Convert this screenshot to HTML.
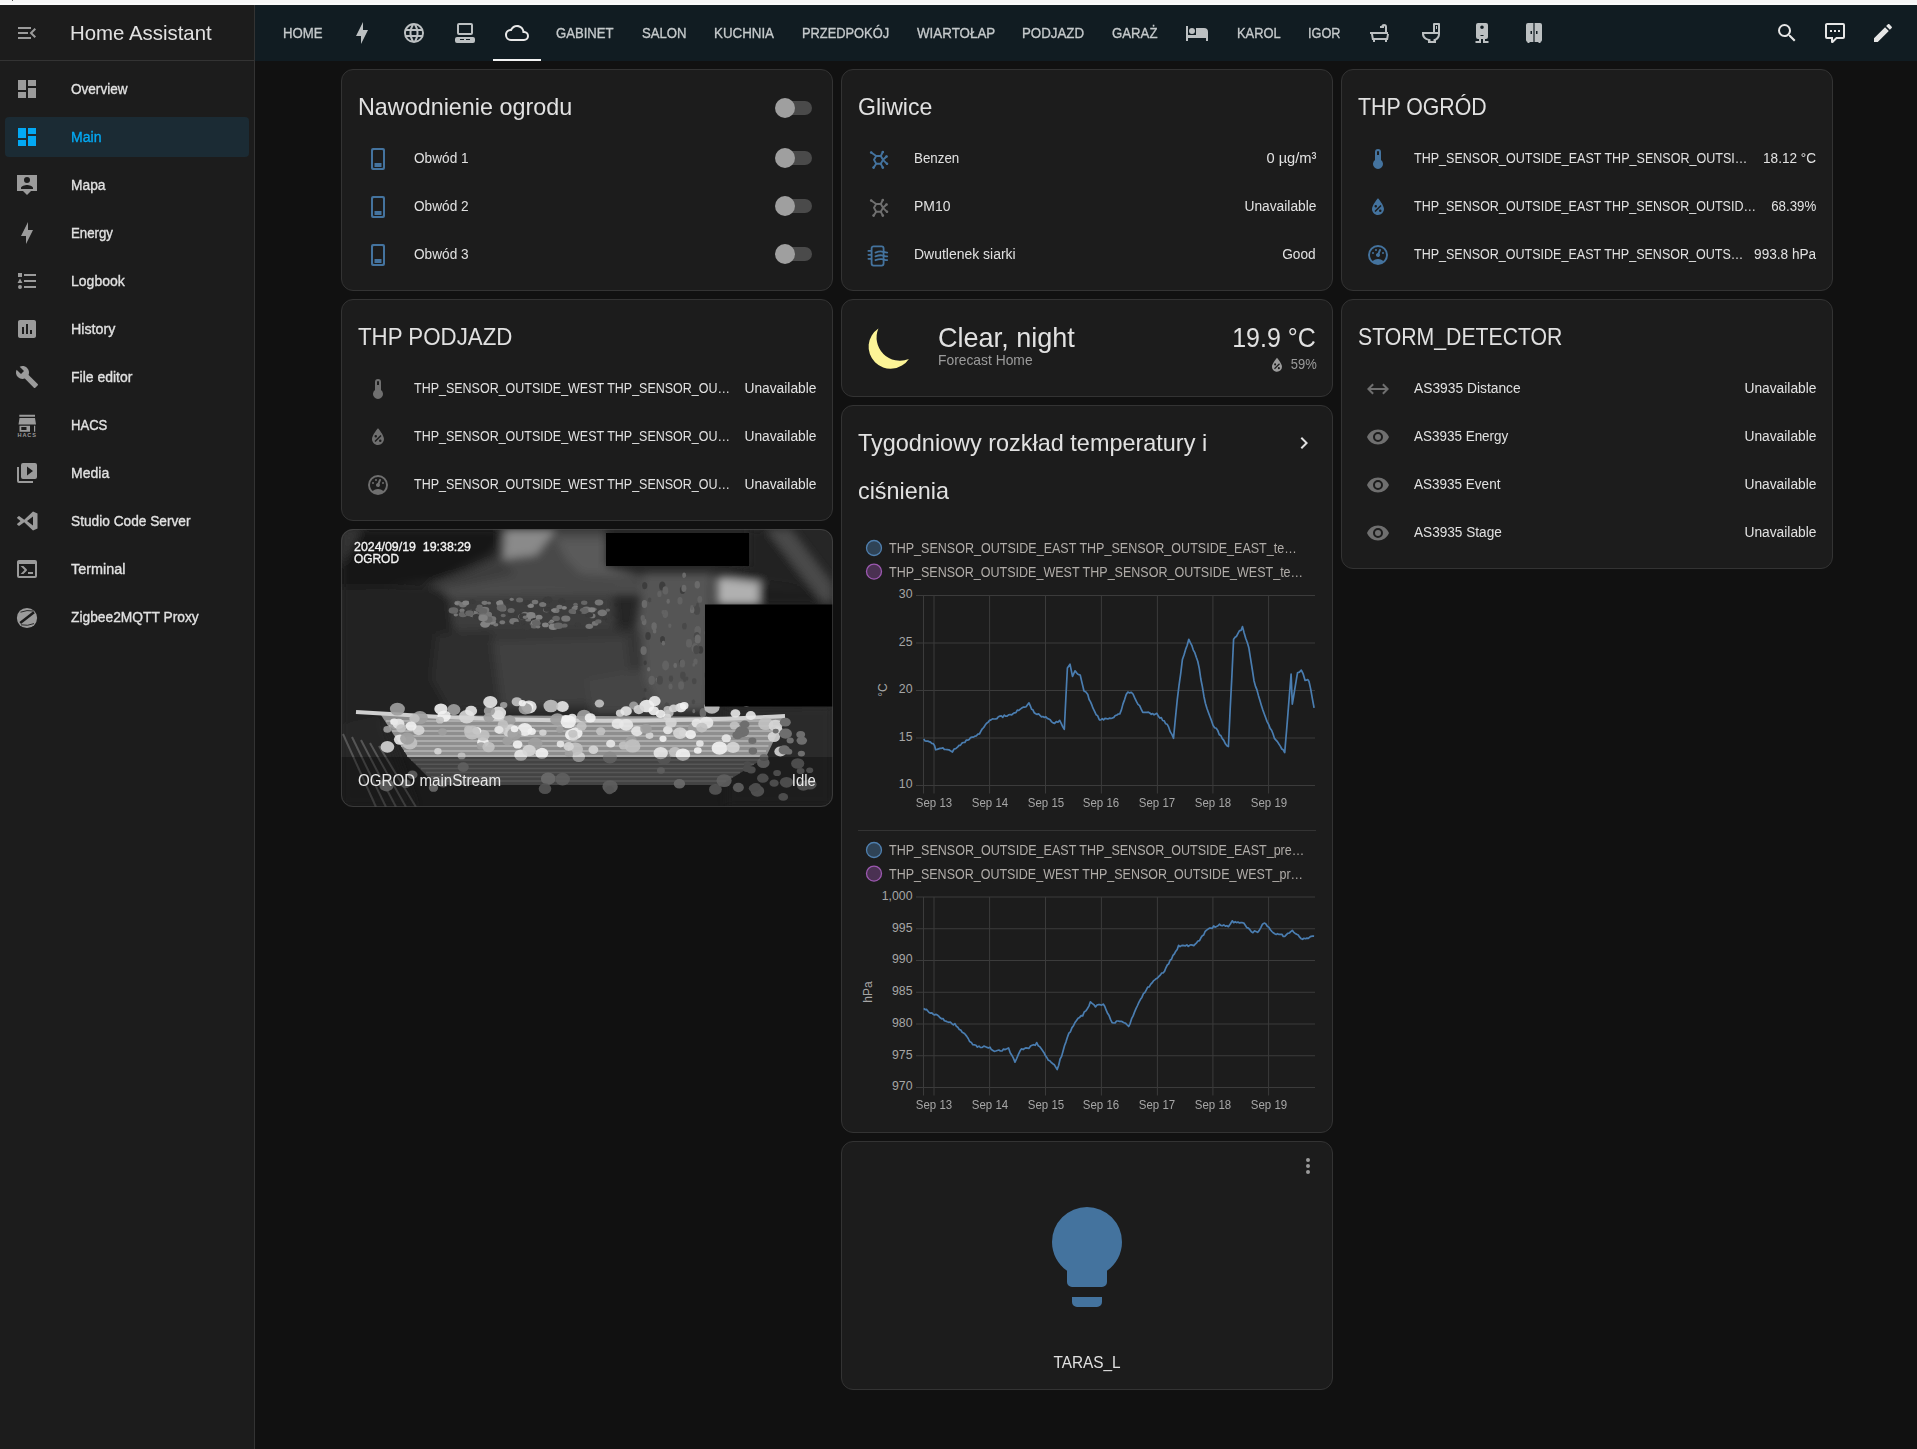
<!DOCTYPE html>
<html><head><meta charset="utf-8">
<style>
*{box-sizing:border-box;margin:0;padding:0}
html,body{width:1917px;height:1449px;overflow:hidden;background:#111111;font-family:"Liberation Sans",sans-serif;color:#e1e1e1}
.abs{position:absolute}
.t{position:absolute;white-space:nowrap;line-height:1}
.card{position:absolute;background:#1c1c1c;border:1px solid #333333;border-radius:12px;overflow:hidden}
.tog{position:absolute;width:36px;height:20px}
.tog .tr{position:absolute;left:3px;top:3px;width:34px;height:14px;border-radius:7px;background:#4a4a4a}
.tog .th{position:absolute;left:0;top:0;width:20px;height:20px;border-radius:10px;background:#9f9f9f}
.ell{overflow:hidden;text-overflow:ellipsis}
</style></head><body>
<div class="abs" style="left:0;top:0;width:1917px;height:5px;background:#f6f6f6"></div>
<div class="abs" style="left:0;top:3px;width:1917px;height:2px;background:#fafafa"></div>
<div class="abs" style="left:12px;top:0;width:1px;height:1px;background:#555"></div>

<div class="abs" style="left:0;top:5px;width:255px;height:1444px;background:#1c1c1c;border-right:1px solid #333333"></div>
<div class="abs" style="left:0;top:60px;width:254px;height:1px;background:#333333"></div>
<svg class="abs" style="left:15px;top:21px;width:24px;height:24px;fill:#9b9b9b" viewBox="0 0 24 24"><path d="M21,15.61L19.59,17L14.58,12L19.59,7L21,8.39L17.44,12L21,15.61M3,6H16V8H3V6M3,13V11H13V13H3M3,18V16H16V18H3Z"/></svg>
<div class="t" style="top:22.22px;font-size:21px;color:#e1e1e1;transform:scaleX(0.9712);transform-origin:0 0;left:70px;">Home Assistant</div>
<svg class="abs" style="left:15px;top:77px;width:24px;height:24px;fill:#9b9b9b" viewBox="0 0 24 24"><path d="M13,3V9H21V3M13,21H21V11H13M3,21H11V15H3M3,13H11V3H3V13Z"/></svg>
<div class="t" style="top:81.13px;font-size:15.2px;color:#e1e1e1;-webkit-text-stroke:0.35px currentColor;transform:scaleX(0.8926);transform-origin:0 0;left:71px;">Overview</div>
<div class="abs" style="left:5px;top:117px;width:244px;height:40px;border-radius:4px;background:#1b2b34"></div>
<svg class="abs" style="left:15px;top:125px;width:24px;height:24px;fill:#03a9f4" viewBox="0 0 24 24"><path d="M13,3V9H21V3M13,21H21V11H13M3,21H11V15H3M3,13H11V3H3V13Z"/></svg>
<div class="t" style="top:129.13px;font-size:15.2px;color:#03a9f4;-webkit-text-stroke:0.35px currentColor;transform:scaleX(0.9264);transform-origin:0 0;left:71px;">Main</div>
<svg class="abs" style="left:15px;top:173px;width:24px;height:24px;fill:#9b9b9b" viewBox="0 0 24 24"><path d="M2,2H22V18H16L12,22L8,18H2V2M12,4A3,3 0 0,0 9,7A3,3 0 0,0 12,10A3,3 0 0,0 15,7A3,3 0 0,0 12,4M6,16H18V15C18,13 14,12 12,12C10,12 6,13 6,15V16Z"/></svg>
<div class="t" style="top:177.13px;font-size:15.2px;color:#e1e1e1;-webkit-text-stroke:0.35px currentColor;transform:scaleX(0.9079);transform-origin:0 0;left:71px;">Mapa</div>
<svg class="abs" style="left:15px;top:221px;width:24px;height:24px;fill:#9b9b9b" viewBox="0 0 24 24"><path d="M11 15H6L13 1V9H18L11 23V15Z"/></svg>
<div class="t" style="top:225.13px;font-size:15.2px;color:#e1e1e1;-webkit-text-stroke:0.35px currentColor;transform:scaleX(0.8727);transform-origin:0 0;left:71px;">Energy</div>
<svg class="abs" style="left:15px;top:269px;width:24px;height:24px;fill:#9b9b9b" viewBox="0 0 24 24"><path d="M5,9.5L7.5,14H2.5L5,9.5M3,4H7V8H3V4M5,20A2,2 0 0,0 7,18A2,2 0 0,0 5,16A2,2 0 0,0 3,18A2,2 0 0,0 5,20M9,5V7H21V5H9M9,19H21V17H9V19M9,13H21V11H9V13Z"/></svg>
<div class="t" style="top:273.13px;font-size:15.2px;color:#e1e1e1;-webkit-text-stroke:0.35px currentColor;transform:scaleX(0.9231);transform-origin:0 0;left:71px;">Logbook</div>
<svg class="abs" style="left:15px;top:317px;width:24px;height:24px;fill:#9b9b9b" viewBox="0 0 24 24"><path d="M9 17H7V10H9V17M13 17H11V7H13V17M17 17H15V13H17V17M19 3H5C3.9 3 3 3.9 3 5V19C3 20.1 3.9 21 5 21H19C20.1 21 21 20.1 21 19V5C21 3.9 20.1 3 19 3Z"/></svg>
<div class="t" style="top:321.13px;font-size:15.2px;color:#e1e1e1;-webkit-text-stroke:0.35px currentColor;transform:scaleX(0.9373);transform-origin:0 0;left:71px;">History</div>
<svg class="abs" style="left:15px;top:365px;width:24px;height:24px;fill:#9b9b9b" viewBox="0 0 24 24"><path d="M22.7,19L13.6,9.9C14.5,7.6 14,4.9 12.1,3C10.1,1 7.1,0.6 4.7,1.7L9,6L6,9L1.6,4.7C0.4,7.1 0.9,10.1 2.9,12.1C4.8,14 7.5,14.5 9.8,13.6L18.9,22.7C19.3,23.1 19.9,23.1 20.3,22.7L22.6,20.4C23.1,20 23.1,19.3 22.7,19Z"/></svg>
<div class="t" style="top:369.13px;font-size:15.2px;color:#e1e1e1;-webkit-text-stroke:0.35px currentColor;transform:scaleX(0.9207);transform-origin:0 0;left:71px;">File editor</div>
<svg class="abs" style="left:15px;top:413px;width:24px;height:24px;overflow:visible" viewBox="0 0 24 24"><path fill="#9b9b9b" fill-rule="evenodd" d="M4.3,1.8H20V3.8H4.3Z M4.5,4.9H20L21,11.5H3.5Z M4.5,12.8H15V18.7H4.5Z M6.3,14.1H11.5V17.1H6.3Z M19,12.8H20.2V18.7H19Z"/><text x="12.2" y="24.3" font-size="5.6" font-weight="700" text-anchor="middle" letter-spacing="0.9" fill="#9b9b9b" font-family="Liberation Sans">HACS</text></svg>
<div class="t" style="top:417.13px;font-size:15.2px;color:#e1e1e1;-webkit-text-stroke:0.35px currentColor;transform:scaleX(0.8601);transform-origin:0 0;left:71px;">HACS</div>
<svg class="abs" style="left:15px;top:461px;width:24px;height:24px;fill:#9b9b9b" viewBox="0 0 24 24"><path d="M4,6H2V20A2,2 0 0,0 4,22H18V20H4V6M22,4V16A2,2 0 0,1 20,18H8A2,2 0 0,1 6,16V4A2,2 0 0,1 8,2H20A2,2 0 0,1 22,4M12,14.5L18,10L12,5.5V14.5Z"/></svg>
<div class="t" style="top:465.13px;font-size:15.2px;color:#e1e1e1;-webkit-text-stroke:0.35px currentColor;transform:scaleX(0.9233);transform-origin:0 0;left:71px;">Media</div>
<svg class="abs" style="left:16px;top:509px;width:24px;height:24px;overflow:visible" viewBox="0 0 24 24"><path fill="#9b9b9b" fill-rule="evenodd" d="M17,16.47V7.39L11,11.93Z M1.22,9.19C1.22,9.19 0.75,8.84 1.31,8.37L2.62,7.2C2.62,7.2 3,6.8 3.4,7.15L8.22,10.79L17,2.55L21.5,4.5V19.5L17,21.45L8.22,13.2L3.4,16.85C3,17.2 2.62,16.8 2.62,16.8L1.31,15.63C0.75,15.16 1.22,14.81 1.22,14.81L4.5,12L1.22,9.19Z"/></svg>
<div class="t" style="top:513.13px;font-size:15.2px;color:#e1e1e1;-webkit-text-stroke:0.35px currentColor;transform:scaleX(0.9016);transform-origin:0 0;left:71px;">Studio Code Server</div>
<svg class="abs" style="left:15px;top:557px;width:24px;height:24px;fill:#9b9b9b" viewBox="0 0 24 24"><path d="M20,19V7H4V19H20M20,3A2,2 0 0,1 22,5V19A2,2 0 0,1 20,21H4A2,2 0 0,1 2,19V5C2,3.89 2.9,3 4,3H20M13,17V15H18V17H13M9.58,13L5.57,9H8.4L11.7,12.3C12.09,12.69 12.09,13.33 11.7,13.72L8.42,17H5.59L9.58,13Z"/></svg>
<div class="t" style="top:561.13px;font-size:15.2px;color:#e1e1e1;-webkit-text-stroke:0.35px currentColor;transform:scaleX(0.9479);transform-origin:0 0;left:71px;">Terminal</div>
<svg class="abs" style="left:15px;top:605px;width:24px;height:24px;overflow:visible" viewBox="0 0 24 24"><circle cx="12" cy="13" r="10.1" fill="#9b9b9b"/><g stroke="#1c1c1c" fill="none" stroke-linecap="butt"><path d="M5.2,18 L19,7.2" stroke-width="2.6"/><path d="M5.5,7.2 Q12,4.6 18.5,6" stroke-width="0.9"/><path d="M6,19.8 Q12.5,21.3 19,18.6" stroke-width="0.9"/></g></svg>
<div class="t" style="top:609.13px;font-size:15.2px;color:#e1e1e1;-webkit-text-stroke:0.35px currentColor;transform:scaleX(0.9078);transform-origin:0 0;left:71px;">Zigbee2MQTT Proxy</div>
<div class="abs" style="left:255px;top:5px;width:1662px;height:56px;background:#111c22"></div>
<div class="t" style="top:25.08px;font-size:15.5px;color:#c5c9cb;-webkit-text-stroke:0.35px currentColor;transform:scaleX(0.8516);transform-origin:0 0;left:283px;">HOME</div>
<svg class="abs" style="left:350px;top:21px;width:24px;height:24px;fill:#bcc0c2" viewBox="0 0 24 24"><path d="M11 15H6L13 1V9H18L11 23V15Z"/></svg>
<svg class="abs" style="left:402px;top:21px;width:24px;height:24px;fill:#bcc0c2" viewBox="0 0 24 24"><path d="M16.36,14C16.44,13.34 16.5,12.68 16.5,12C16.5,11.32 16.44,10.66 16.36,10H19.74C19.9,10.64 20,11.31 20,12C20,12.69 19.9,13.36 19.74,14M14.59,19.56C15.19,18.45 15.65,17.25 15.97,16H18.92C17.96,17.65 16.43,18.93 14.59,19.56M14.34,14H9.66C9.56,13.34 9.5,12.68 9.5,12C9.5,11.32 9.56,10.65 9.66,10H14.34C14.43,10.65 14.5,11.32 14.5,12C14.5,12.68 14.43,13.34 14.34,14M12,19.96C11.17,18.76 10.5,17.43 10.09,16H13.91C13.5,17.43 12.83,18.76 12,19.96M8,8H5.08C6.03,6.34 7.57,5.06 9.4,4.44C8.8,5.55 8.35,6.75 8,8M5.08,16H8C8.35,17.25 8.8,18.45 9.4,19.56C7.57,18.93 6.03,17.65 5.08,16M4.26,14C4.1,13.36 4,12.69 4,12C4,11.31 4.1,10.64 4.26,10H7.64C7.56,10.66 7.5,11.32 7.5,12C7.5,12.68 7.56,13.34 7.64,14M12,4.03C12.83,5.23 13.5,6.57 13.91,8H10.09C10.5,6.57 11.17,5.23 12,4.03M18.92,8H15.97C15.65,6.75 15.19,5.55 14.59,4.44C16.43,5.07 17.96,6.34 18.92,8M12,2C6.47,2 2,6.5 2,12A10,10 0 0,0 12,22A10,10 0 0,0 22,12A10,10 0 0,0 12,2Z"/></svg>
<svg class="abs" style="left:453px;top:21px;width:24px;height:24px;fill:#bcc0c2" viewBox="0 0 24 24"><path d="M6,2H18A2,2 0 0,1 20,4V12A2,2 0 0,1 18,14H6A2,2 0 0,1 4,12V4A2,2 0 0,1 6,2M6,4V12H18V4H6M4,16H20A2,2 0 0,1 22,18V20A2,2 0 0,1 20,22H4A2,2 0 0,1 2,20V18A2,2 0 0,1 4,16M7,18V19H11V18H7M13,18V19H17V18H13Z"/></svg>
<svg class="abs" style="left:505px;top:21px;width:24px;height:24px;fill:#e8e8e8" viewBox="0 0 24 24"><path d="M19,18H6A4,4 0 0,1 2,14A4,4 0 0,1 6,10H6.71C7.37,7.69 9.5,6 12,6A5.5,5.5 0 0,1 17.5,11.5V12H19A3,3 0 0,1 22,15A3,3 0 0,1 19,18M19.35,10.03C18.67,6.59 15.64,4 12,4C9.11,4 6.6,5.64 5.35,8.03C2.34,8.36 0,10.9 0,14A6,6 0 0,0 6,20H19A5,5 0 0,0 24,15C24,12.36 21.95,10.22 19.35,10.03Z"/></svg>
<div class="t" style="top:25.08px;font-size:15.5px;color:#c5c9cb;-webkit-text-stroke:0.35px currentColor;transform:scaleX(0.8465);transform-origin:0 0;left:556px;">GABINET</div>
<div class="t" style="top:25.08px;font-size:15.5px;color:#c5c9cb;-webkit-text-stroke:0.35px currentColor;transform:scaleX(0.8485);transform-origin:0 0;left:642px;">SALON</div>
<div class="t" style="top:25.08px;font-size:15.5px;color:#c5c9cb;-webkit-text-stroke:0.35px currentColor;transform:scaleX(0.8600);transform-origin:0 0;left:714px;">KUCHNIA</div>
<div class="t" style="top:25.08px;font-size:15.5px;color:#c5c9cb;-webkit-text-stroke:0.35px currentColor;transform:scaleX(0.8289);transform-origin:0 0;left:802px;">PRZEDPOKÓJ</div>
<div class="t" style="top:25.08px;font-size:15.5px;color:#c5c9cb;-webkit-text-stroke:0.35px currentColor;transform:scaleX(0.8619);transform-origin:0 0;left:917px;">WIARTOŁAP</div>
<div class="t" style="top:25.08px;font-size:15.5px;color:#c5c9cb;-webkit-text-stroke:0.35px currentColor;transform:scaleX(0.8584);transform-origin:0 0;left:1022px;">PODJAZD</div>
<div class="t" style="top:25.08px;font-size:15.5px;color:#c5c9cb;-webkit-text-stroke:0.35px currentColor;transform:scaleX(0.8520);transform-origin:0 0;left:1112px;">GARAŻ</div>
<svg class="abs" style="left:1185px;top:21px;width:24px;height:24px;fill:#bcc0c2" viewBox="0 0 24 24"><path d="M19,7H11V14H3V5H1V20H3V17H21V20H23V11A4,4 0 0,0 19,7M7,13A3,3 0 0,0 10,10A3,3 0 0,0 7,7A3,3 0 0,0 4,10A3,3 0 0,0 7,13Z"/></svg>
<div class="t" style="top:25.08px;font-size:15.5px;color:#c5c9cb;-webkit-text-stroke:0.35px currentColor;transform:scaleX(0.8333);transform-origin:0 0;left:1237px;">KAROL</div>
<div class="t" style="top:25.08px;font-size:15.5px;color:#c5c9cb;-webkit-text-stroke:0.35px currentColor;transform:scaleX(0.8202);transform-origin:0 0;left:1308px;">IGOR</div>
<svg class="abs" style="left:1368px;top:21px;width:24px;height:24px;fill:#bcc0c2" viewBox="0 0 24 24"><path d="M20 13V11H19V6A3 3 0 0 0 16 3A3 3 0 0 0 13.2 5H12V7H16V5.5C16.5 5.2 17 5 17 6V11H2V13H3L4 19H5V21H7V19H17V21H19V19H20L21 13M18.3 17H5.7L5 13H19Z"/></svg>
<svg class="abs" style="left:1419px;top:21px;width:24px;height:24px;fill:#bcc0c2" viewBox="0 0 24 24"><path d="M9,22H17V19.5C19.41,18.41 21,16 21,13V3A1,1 0 0,0 20,2H15C14,2 14,3 14,3V11H3C3,11 3,13 3,13C3,16 4.89,18.5 9,19.5V22M5.08,13H19C19,15.7 16.7,17.9 14.5,18.2V20H11.5V18.2C8,17.8 5.5,16.3 5.08,13M16,4H19V11H16V4M17,5V8H18V5H17Z"/></svg>
<svg class="abs" style="left:1470px;top:21px;width:24px;height:24px;fill:#bcc0c2" viewBox="0 0 24 24"><path d="M8,2H16A2,2 0 0,1 18,4V16A2,2 0 0,1 16,18H15V20H18.5V22H13V18H11V22H5.5V20H9V18H8A2,2 0 0,1 6,16V4A2,2 0 0,1 8,2M12,4.5A1.8,1.8 0 0,0 10.2,6.3A1.8,1.8 0 0,0 12,8.1A1.8,1.8 0 0,0 13.8,6.3A1.8,1.8 0 0,0 12,4.5M10.5,14V15H13.5V14H10.5Z"/></svg>
<svg class="abs" style="left:1522px;top:21px;width:24px;height:24px;fill:#bcc0c2" viewBox="0 0 24 24"><path d="M6,2H11.4V21H7.5V22H5.5V21A2,2 0 0,1 4,19V4A2,2 0 0,1 6,2M12.6,2H18A2,2 0 0,1 20,4V19A2,2 0 0,1 18.5,21V22H16.5V21H12.6V2M8.5,10V13H10V10H8.5M14,10V13H15.5V10H14Z"/></svg>
<div class="abs" style="left:493px;top:59px;width:48px;height:2px;background:#f2f2f2"></div>
<svg class="abs" style="left:1775px;top:21px;width:24px;height:24px;fill:#e6e6e6" viewBox="0 0 24 24"><path d="M9.5,3A6.5,6.5 0 0,1 16,9.5C16,11.11 15.41,12.59 14.44,13.73L14.71,14H15.5L20.5,19L19,20.5L14,15.5V14.71L13.73,14.44C12.59,15.41 11.11,16 9.5,16A6.5,6.5 0 0,1 3,9.5A6.5,6.5 0 0,1 9.5,3M9.5,5C7,5 5,7 5,9.5C5,12 7,14 9.5,14C12,14 14,12 14,9.5C14,7 12,5 9.5,5Z"/></svg>
<svg class="abs" style="left:1823px;top:21px;width:24px;height:24px;fill:#e6e6e6" viewBox="0 0 24 24"><path d="M9,22A1,1 0 0,1 8,21V18H4A2,2 0 0,1 2,16V4C2,2.89 2.9,2 4,2H20A2,2 0 0,1 22,4V16A2,2 0 0,1 20,18H13.9L10.2,21.71C10,21.9 9.75,22 9.5,22V22H9M10,16V19.08L13.08,16H20V4H4V16H10M17,11H15V9H17V11M13,11H11V9H13V11M9,11H7V9H9V11Z"/></svg>
<svg class="abs" style="left:1871px;top:21px;width:24px;height:24px;fill:#e6e6e6" viewBox="0 0 24 24"><path d="M20.71,7.04C21.1,6.65 21.1,6 20.71,5.63L18.37,3.29C18,2.9 17.35,2.9 16.96,3.29L15.12,5.12L18.87,8.87M3,17.25V21H6.75L17.81,9.93L14.06,6.18L3,17.25Z"/></svg>
<div class="card" style="left:341px;top:69px;width:492px;height:222px;"></div>
<div class="t" style="top:94.98px;font-size:24px;color:#e1e1e1;transform:scaleX(0.9729);transform-origin:0 0;left:358px;">Nawodnienie ogrodu</div>
<div class="tog" style="left:775px;top:98px"><div class="tr"></div><div class="th"></div></div>
<svg class="abs" style="left:366px;top:147px;width:24px;height:24px;fill:#44739e" viewBox="0 0 24 24"><path d="M7,1H17A2,2 0 0,1 19,3V21A2,2 0 0,1 17,23H7A2,2 0 0,1 5,21V3A2,2 0 0,1 7,1M8,3A1,1 0 0,0 7,4V20A1,1 0 0,0 8,21H16A1,1 0 0,0 17,20V4A1,1 0 0,0 16,3H8M8.5,16H15.5V20H8.5V16Z"/></svg>
<div class="t" style="top:149.96px;font-size:15.4px;color:#e1e1e1;transform:scaleX(0.8862);transform-origin:0 0;left:414px;">Obwód 1</div>
<div class="tog" style="left:775px;top:148px"><div class="tr"></div><div class="th"></div></div>
<svg class="abs" style="left:366px;top:195px;width:24px;height:24px;fill:#44739e" viewBox="0 0 24 24"><path d="M7,1H17A2,2 0 0,1 19,3V21A2,2 0 0,1 17,23H7A2,2 0 0,1 5,21V3A2,2 0 0,1 7,1M8,3A1,1 0 0,0 7,4V20A1,1 0 0,0 8,21H16A1,1 0 0,0 17,20V4A1,1 0 0,0 16,3H8M8.5,16H15.5V20H8.5V16Z"/></svg>
<div class="t" style="top:197.96px;font-size:15.4px;color:#e1e1e1;transform:scaleX(0.8862);transform-origin:0 0;left:414px;">Obwód 2</div>
<div class="tog" style="left:775px;top:196px"><div class="tr"></div><div class="th"></div></div>
<svg class="abs" style="left:366px;top:243px;width:24px;height:24px;fill:#44739e" viewBox="0 0 24 24"><path d="M7,1H17A2,2 0 0,1 19,3V21A2,2 0 0,1 17,23H7A2,2 0 0,1 5,21V3A2,2 0 0,1 7,1M8,3A1,1 0 0,0 7,4V20A1,1 0 0,0 8,21H16A1,1 0 0,0 17,20V4A1,1 0 0,0 16,3H8M8.5,16H15.5V20H8.5V16Z"/></svg>
<div class="t" style="top:245.96px;font-size:15.4px;color:#e1e1e1;transform:scaleX(0.8862);transform-origin:0 0;left:414px;">Obwód 3</div>
<div class="tog" style="left:775px;top:244px"><div class="tr"></div><div class="th"></div></div>
<div class="card" style="left:341px;top:299px;width:492px;height:222px;"></div>
<div class="t" style="top:324.98px;font-size:24px;color:#e1e1e1;transform:scaleX(0.9287);transform-origin:0 0;left:358px;">THP PODJAZD</div>
<svg class="abs" style="left:366px;top:377px;width:24px;height:24px;fill:#6f6f6f" viewBox="0 0 24 24"><path d="M15 13V5A3 3 0 0 0 9 5V13A5 5 0 1 0 15 13M12 4A1 1 0 0 1 13 5V8H11V5A1 1 0 0 1 12 4Z"/></svg>
<div class="t" style="top:379.96px;font-size:15.4px;color:#e1e1e1;transform:scaleX(0.8115);transform-origin:0 0;left:414px;">THP_SENSOR_OUTSIDE_WEST THP_SENSOR_OU…</div>
<div class="t" style="top:379.96px;font-size:15.4px;color:#e1e1e1;transform:scaleX(0.8951);transform-origin:100% 0;right:1101.00px;">Unavailable</div>
<svg class="abs" style="left:366px;top:425px;width:24px;height:24px;fill:#6f6f6f" viewBox="0 0 24 24"><path d="M12,3.25C12,3.25 6,10 6,14C6,17.32 8.69,20 12,20A6,6 0 0,0 18,14C18,10 12,3.25 12,3.25M14.47,9.97L15.53,11.03L9.53,17.03L8.47,15.97M9.75,10A1.25,1.25 0 0,1 11,11.25A1.25,1.25 0 0,1 9.75,12.5A1.25,1.25 0 0,1 8.5,11.25A1.25,1.25 0 0,1 9.75,10M14.25,14.5A1.25,1.25 0 0,1 15.5,15.75A1.25,1.25 0 0,1 14.25,17A1.25,1.25 0 0,1 13,15.75A1.25,1.25 0 0,1 14.25,14.5Z"/></svg>
<div class="t" style="top:427.96px;font-size:15.4px;color:#e1e1e1;transform:scaleX(0.8115);transform-origin:0 0;left:414px;">THP_SENSOR_OUTSIDE_WEST THP_SENSOR_OU…</div>
<div class="t" style="top:427.96px;font-size:15.4px;color:#e1e1e1;transform:scaleX(0.8951);transform-origin:100% 0;right:1101.00px;">Unavailable</div>
<svg class="abs" style="left:366px;top:473px;width:24px;height:24px;fill:#6f6f6f" viewBox="0 0 24 24"><path d="M12,2A10,10 0 0,0 2,12A10,10 0 0,0 12,22A10,10 0 0,0 22,12A10,10 0 0,0 12,2M12,4A8,8 0 0,1 20,12C20,14.4 19,16.5 17.3,18C15.9,16.7 14,16 12,16C10,16 8.2,16.7 6.7,18C5,16.5 4,14.4 4,12A8,8 0 0,1 12,4M14,5.89C13.62,5.9 13.26,6.15 13.1,6.54L11.81,9.77L11.71,10C11,10.13 10.41,10.6 10.14,11.26C9.73,12.29 10.23,13.45 11.26,13.86C12.29,14.27 13.45,13.77 13.86,12.74C14.12,12.08 14,11.32 13.57,10.76L13.67,10.5L14.96,7.29L14.97,7.26C15.17,6.75 14.92,6.17 14.41,5.96C14.28,5.91 14.15,5.89 14,5.89M10,6A1,1 0 0,0 9,7A1,1 0 0,0 10,8A1,1 0 0,0 11,7A1,1 0 0,0 10,6M7,9A1,1 0 0,0 6,10A1,1 0 0,0 7,11A1,1 0 0,0 8,10A1,1 0 0,0 7,9M17,9A1,1 0 0,0 16,10A1,1 0 0,0 17,11A1,1 0 0,0 18,10A1,1 0 0,0 17,9Z"/></svg>
<div class="t" style="top:475.96px;font-size:15.4px;color:#e1e1e1;transform:scaleX(0.8115);transform-origin:0 0;left:414px;">THP_SENSOR_OUTSIDE_WEST THP_SENSOR_OU…</div>
<div class="t" style="top:475.96px;font-size:15.4px;color:#e1e1e1;transform:scaleX(0.8951);transform-origin:100% 0;right:1101.00px;">Unavailable</div>
<div class="card" style="left:841px;top:69px;width:492px;height:222px;"></div>
<div class="t" style="top:94.98px;font-size:24px;color:#e1e1e1;transform:scaleX(0.9606);transform-origin:0 0;left:858px;">Gliwice</div>
<svg class="abs" style="left:866px;top:147px;width:24px;height:24px;overflow:visible" viewBox="0 0 24 24"><g fill="none" stroke="#44739e" stroke-width="1.9" stroke-linecap="round" stroke-linejoin="round"><path d="M10.2,9 H14.8 L17,12.8 L14.8,16.7 H10.2 L8,12.8 Z"/><path d="M10.2,9 L5.2,5.5 M14.8,9 L16.8,5 M17,12.8 L20.5,9.5 M17,12.8 L21,16.8 M10.2,16.7 L7.6,20.6 M14.8,16.7 L16.8,20.6"/></g><g fill="#44739e"><circle cx="5.2" cy="5.5" r="1.3"/><circle cx="16.8" cy="5" r="1.3"/><circle cx="20.5" cy="9.5" r="1.3"/><circle cx="21" cy="16.8" r="1.3"/><circle cx="7.6" cy="20.6" r="1.3"/><circle cx="16.8" cy="20.6" r="1.3"/></g></svg>
<div class="t" style="top:149.96px;font-size:15.4px;color:#e1e1e1;transform:scaleX(0.8678);transform-origin:0 0;left:914px;">Benzen</div>
<div class="t" style="top:149.96px;font-size:15.4px;color:#e1e1e1;transform:scaleX(0.9543);transform-origin:100% 0;right:601.00px;">0 µg/m³</div>
<svg class="abs" style="left:866px;top:195px;width:24px;height:24px;overflow:visible" viewBox="0 0 24 24"><g fill="none" stroke="#6f6f6f" stroke-width="1.9" stroke-linecap="round" stroke-linejoin="round"><path d="M10.2,9 H14.8 L17,12.8 L14.8,16.7 H10.2 L8,12.8 Z"/><path d="M10.2,9 L5.2,5.5 M14.8,9 L16.8,5 M17,12.8 L20.5,9.5 M17,12.8 L21,16.8 M10.2,16.7 L7.6,20.6 M14.8,16.7 L16.8,20.6"/></g><g fill="#6f6f6f"><circle cx="5.2" cy="5.5" r="1.3"/><circle cx="16.8" cy="5" r="1.3"/><circle cx="20.5" cy="9.5" r="1.3"/><circle cx="21" cy="16.8" r="1.3"/><circle cx="7.6" cy="20.6" r="1.3"/><circle cx="16.8" cy="20.6" r="1.3"/></g></svg>
<div class="t" style="top:197.96px;font-size:15.4px;color:#e1e1e1;transform:scaleX(0.9051);transform-origin:0 0;left:914px;">PM10</div>
<div class="t" style="top:197.96px;font-size:15.4px;color:#e1e1e1;transform:scaleX(0.8951);transform-origin:100% 0;right:601.00px;">Unavailable</div>
<svg class="abs" style="left:866px;top:243px;width:24px;height:24px;overflow:visible" viewBox="0 0 24 24"><g fill="none" stroke="#44739e" stroke-width="1.8" stroke-linecap="round"><path d="M7.6,3.4 H15.6 A2,2 0 0,1 17.6,5.4 V20.6 A2,2 0 0,1 15.6,22.6 H7.6 A2,2 0 0,1 5.6,20.6 V5.4 A2,2 0 0,1 7.6,3.4 Z"/><path d="M2.4,7.9 H5 M2.4,11.8 H5 M2.4,15.8 H5"/><path d="M9.5,9.6 C12,8.6 14,8.2 16,8.6 C18,9 19.5,9.4 21.2,9.6 M9.5,13.4 C12,12.4 14,12 16,12.4 C18,12.8 19.5,13.2 21.2,13.4 M9.5,17.2 C12,16.2 14,15.8 16,16.2 C18,16.6 19.5,17 21.2,17.2"/></g></svg>
<div class="t" style="top:245.96px;font-size:15.4px;color:#e1e1e1;transform:scaleX(0.9075);transform-origin:0 0;left:914px;">Dwutlenek siarki</div>
<div class="t" style="top:245.96px;font-size:15.4px;color:#e1e1e1;transform:scaleX(0.8896);transform-origin:100% 0;right:601.00px;">Good</div>
<div class="card" style="left:1341px;top:69px;width:492px;height:222px;"></div>
<div class="t" style="top:94.98px;font-size:24px;color:#e1e1e1;transform:scaleX(0.8875);transform-origin:0 0;left:1358px;">THP OGRÓD</div>
<svg class="abs" style="left:1366px;top:147px;width:24px;height:24px;fill:#44739e" viewBox="0 0 24 24"><path d="M15 13V5A3 3 0 0 0 9 5V13A5 5 0 1 0 15 13M12 4A1 1 0 0 1 13 5V8H11V5A1 1 0 0 1 12 4Z"/></svg>
<div class="t" style="top:149.96px;font-size:15.4px;color:#e1e1e1;transform:scaleX(0.8147);transform-origin:0 0;left:1414px;">THP_SENSOR_OUTSIDE_EAST THP_SENSOR_OUTSI…</div>
<div class="t" style="top:149.96px;font-size:15.4px;color:#e1e1e1;transform:scaleX(0.8824);transform-origin:100% 0;right:101.00px;">18.12 °C</div>
<svg class="abs" style="left:1366px;top:195px;width:24px;height:24px;fill:#44739e" viewBox="0 0 24 24"><path d="M12,3.25C12,3.25 6,10 6,14C6,17.32 8.69,20 12,20A6,6 0 0,0 18,14C18,10 12,3.25 12,3.25M14.47,9.97L15.53,11.03L9.53,17.03L8.47,15.97M9.75,10A1.25,1.25 0 0,1 11,11.25A1.25,1.25 0 0,1 9.75,12.5A1.25,1.25 0 0,1 8.5,11.25A1.25,1.25 0 0,1 9.75,10M14.25,14.5A1.25,1.25 0 0,1 15.5,15.75A1.25,1.25 0 0,1 14.25,17A1.25,1.25 0 0,1 13,15.75A1.25,1.25 0 0,1 14.25,14.5Z"/></svg>
<div class="t" style="top:197.96px;font-size:15.4px;color:#e1e1e1;transform:scaleX(0.8139);transform-origin:0 0;left:1414px;">THP_SENSOR_OUTSIDE_EAST THP_SENSOR_OUTSID…</div>
<div class="t" style="top:197.96px;font-size:15.4px;color:#e1e1e1;transform:scaleX(0.8620);transform-origin:100% 0;right:101.00px;">68.39%</div>
<svg class="abs" style="left:1366px;top:243px;width:24px;height:24px;fill:#44739e" viewBox="0 0 24 24"><path d="M12,2A10,10 0 0,0 2,12A10,10 0 0,0 12,22A10,10 0 0,0 22,12A10,10 0 0,0 12,2M12,4A8,8 0 0,1 20,12C20,14.4 19,16.5 17.3,18C15.9,16.7 14,16 12,16C10,16 8.2,16.7 6.7,18C5,16.5 4,14.4 4,12A8,8 0 0,1 12,4M14,5.89C13.62,5.9 13.26,6.15 13.1,6.54L11.81,9.77L11.71,10C11,10.13 10.41,10.6 10.14,11.26C9.73,12.29 10.23,13.45 11.26,13.86C12.29,14.27 13.45,13.77 13.86,12.74C14.12,12.08 14,11.32 13.57,10.76L13.67,10.5L14.96,7.29L14.97,7.26C15.17,6.75 14.92,6.17 14.41,5.96C14.28,5.91 14.15,5.89 14,5.89M10,6A1,1 0 0,0 9,7A1,1 0 0,0 10,8A1,1 0 0,0 11,7A1,1 0 0,0 10,6M7,9A1,1 0 0,0 6,10A1,1 0 0,0 7,11A1,1 0 0,0 8,10A1,1 0 0,0 7,9M17,9A1,1 0 0,0 16,10A1,1 0 0,0 17,11A1,1 0 0,0 18,10A1,1 0 0,0 17,9Z"/></svg>
<div class="t" style="top:245.96px;font-size:15.4px;color:#e1e1e1;transform:scaleX(0.8134);transform-origin:0 0;left:1414px;">THP_SENSOR_OUTSIDE_EAST THP_SENSOR_OUTS…</div>
<div class="t" style="top:245.96px;font-size:15.4px;color:#e1e1e1;transform:scaleX(0.8848);transform-origin:100% 0;right:101.00px;">993.8 hPa</div>
<div class="card" style="left:1341px;top:299px;width:492px;height:270px;"></div>
<div class="t" style="top:324.98px;font-size:24px;color:#e1e1e1;transform:scaleX(0.8843);transform-origin:0 0;left:1358px;">STORM_DETECTOR</div>
<svg class="abs" style="left:1366px;top:377px;width:24px;height:24px;fill:#6f6f6f" viewBox="0 0 24 24"><path d="M6.45,17.45L1,12L6.45,6.55L7.86,7.96L4.83,11H19.17L16.14,7.96L17.55,6.55L23,12L17.55,17.45L16.14,16.04L19.17,13H4.83L7.86,16.04L6.45,17.45Z"/></svg>
<div class="t" style="top:379.96px;font-size:15.4px;color:#e1e1e1;transform:scaleX(0.8971);transform-origin:0 0;left:1414px;">AS3935 Distance</div>
<div class="t" style="top:379.96px;font-size:15.4px;color:#e1e1e1;transform:scaleX(0.8951);transform-origin:100% 0;right:101.00px;">Unavailable</div>
<svg class="abs" style="left:1366px;top:425px;width:24px;height:24px;fill:#6f6f6f" viewBox="0 0 24 24"><path d="M12,9A3,3 0 0,0 9,12A3,3 0 0,0 12,15A3,3 0 0,0 15,12A3,3 0 0,0 12,9M12,17A5,5 0 0,1 7,12A5,5 0 0,1 12,7A5,5 0 0,1 17,12A5,5 0 0,1 12,17M12,4.5C7,4.5 2.73,7.61 1,12C2.73,16.39 7,19.5 12,19.5C17,19.5 21.27,16.39 23,12C21.27,7.61 17,4.5 12,4.5Z"/></svg>
<div class="t" style="top:427.96px;font-size:15.4px;color:#e1e1e1;transform:scaleX(0.8747);transform-origin:0 0;left:1414px;">AS3935 Energy</div>
<div class="t" style="top:427.96px;font-size:15.4px;color:#e1e1e1;transform:scaleX(0.8951);transform-origin:100% 0;right:101.00px;">Unavailable</div>
<svg class="abs" style="left:1366px;top:473px;width:24px;height:24px;fill:#6f6f6f" viewBox="0 0 24 24"><path d="M12,9A3,3 0 0,0 9,12A3,3 0 0,0 12,15A3,3 0 0,0 15,12A3,3 0 0,0 12,9M12,17A5,5 0 0,1 7,12A5,5 0 0,1 12,7A5,5 0 0,1 17,12A5,5 0 0,1 12,17M12,4.5C7,4.5 2.73,7.61 1,12C2.73,16.39 7,19.5 12,19.5C17,19.5 21.27,16.39 23,12C21.27,7.61 17,4.5 12,4.5Z"/></svg>
<div class="t" style="top:475.96px;font-size:15.4px;color:#e1e1e1;transform:scaleX(0.8780);transform-origin:0 0;left:1414px;">AS3935 Event</div>
<div class="t" style="top:475.96px;font-size:15.4px;color:#e1e1e1;transform:scaleX(0.8951);transform-origin:100% 0;right:101.00px;">Unavailable</div>
<svg class="abs" style="left:1366px;top:521px;width:24px;height:24px;fill:#6f6f6f" viewBox="0 0 24 24"><path d="M12,9A3,3 0 0,0 9,12A3,3 0 0,0 12,15A3,3 0 0,0 15,12A3,3 0 0,0 12,9M12,17A5,5 0 0,1 7,12A5,5 0 0,1 12,7A5,5 0 0,1 17,12A5,5 0 0,1 12,17M12,4.5C7,4.5 2.73,7.61 1,12C2.73,16.39 7,19.5 12,19.5C17,19.5 21.27,16.39 23,12C21.27,7.61 17,4.5 12,4.5Z"/></svg>
<div class="t" style="top:523.96px;font-size:15.4px;color:#e1e1e1;transform:scaleX(0.8845);transform-origin:0 0;left:1414px;">AS3935 Stage</div>
<div class="t" style="top:523.96px;font-size:15.4px;color:#e1e1e1;transform:scaleX(0.8951);transform-origin:100% 0;right:101.00px;">Unavailable</div>
<div class="card" style="left:841px;top:299px;width:492px;height:98px;"></div>
<svg class="abs" style="left:0;top:0;width:1917px;height:1449px" viewBox="0 0 1917 1449"><path d="M878.4,328.4 A22,22 0 1,0 908.9,358.9 A23.3,23.3 0 0,1 878.4,328.4 Z" fill="#fcf497"/></svg>
<div class="t" style="top:324.30px;font-size:28px;color:#e1e1e1;transform:scaleX(0.9658);transform-origin:0 0;left:938px;">Clear, night</div>
<div class="t" style="top:353.27px;font-size:14.8px;color:#9b9b9b;transform:scaleX(0.9352);transform-origin:0 0;left:938px;">Forecast Home</div>
<div class="t" style="top:324.30px;font-size:28px;color:#e1e1e1;transform:scaleX(0.8911);transform-origin:100% 0;right:601.00px;">19.9 °C</div>
<svg class="abs" style="left:1267px;top:354.5px;width:20px;height:20px;fill:#9b9b9b" viewBox="0 0 24 24"><path d="M12,3.25C12,3.25 6,10 6,14C6,17.32 8.69,20 12,20A6,6 0 0,0 18,14C18,10 12,3.25 12,3.25M14.47,9.97L15.53,11.03L9.53,17.03L8.47,15.97M9.75,10A1.25,1.25 0 0,1 11,11.25A1.25,1.25 0 0,1 9.75,12.5A1.25,1.25 0 0,1 8.5,11.25A1.25,1.25 0 0,1 9.75,10M14.25,14.5A1.25,1.25 0 0,1 15.5,15.75A1.25,1.25 0 0,1 14.25,17A1.25,1.25 0 0,1 13,15.75A1.25,1.25 0 0,1 14.25,14.5Z"/></svg>
<div class="t" style="top:356.16px;font-size:15.4px;color:#9b9b9b;transform:scaleX(0.8438);transform-origin:100% 0;right:600.50px;">59%</div>
<div class="card" style="left:841px;top:405px;width:492px;height:728px;"></div>
<div class="t" style="top:431.28px;font-size:24px;color:#e1e1e1;transform:scaleX(0.9765);transform-origin:0 0;left:858px;">Tygodniowy rozkład temperatury i</div>
<div class="t" style="top:479.18px;font-size:24px;color:#e1e1e1;transform:scaleX(0.9733);transform-origin:0 0;left:858px;">ciśnienia</div>
<svg class="abs" style="left:1292px;top:431px;width:24px;height:24px;fill:#e1e1e1" viewBox="0 0 24 24"><path d="M8.59,16.58L13.17,12L8.59,7.41L10,6L16,12L10,18L8.59,16.58Z"/></svg>
<div class="card" style="left:841px;top:1141px;width:492px;height:249px;"></div>
<svg class="abs" style="left:1296px;top:1154px;width:24px;height:24px;fill:#9b9b9b" viewBox="0 0 24 24"><path d="M12,16A2,2 0 0,1 14,18A2,2 0 0,1 12,20A2,2 0 0,1 10,18A2,2 0 0,1 12,16M12,10A2,2 0 0,1 14,12A2,2 0 0,1 12,14A2,2 0 0,1 10,12A2,2 0 0,1 12,10M12,4A2,2 0 0,1 14,6A2,2 0 0,1 12,8A2,2 0 0,1 10,6A2,2 0 0,1 12,4Z"/></svg>
<svg class="abs" style="left:1027px;top:1197px;width:120px;height:120px;fill:#44739e" viewBox="0 0 24 24"><path d="M12,2A7,7 0 0,0 5,9C5,11.38 6.19,13.47 8,14.74V17A1,1 0 0,0 9,18H15A1,1 0 0,0 16,17V14.74C17.81,13.47 19,11.38 19,9A7,7 0 0,0 12,2M9,21A1,1 0 0,0 10,22H14A1,1 0 0,0 15,21V20H9V21Z"/></svg>
<div class="t" style="top:1353.76px;font-size:17.3px;color:#e1e1e1;transform:scaleX(0.8893);transform-origin:50% 0;left:787px;width:600px;text-align:center;">TARAS_L</div>
<svg class="abs" style="left:0;top:0;width:1917px;height:1449px" viewBox="0 0 1917 1449"><circle cx="874" cy="548" r="7.5" fill="#2f4356" stroke="#4f7fae" stroke-width="1.3"/><circle cx="874" cy="571.6" r="7.5" fill="#4a3152" stroke="#9c58b0" stroke-width="1.3"/><line x1="916" y1="595.5" x2="1315" y2="595.5" stroke="#3b3b3b" stroke-width="1"/><line x1="916" y1="643" x2="1315" y2="643" stroke="#3b3b3b" stroke-width="1"/><line x1="916" y1="690.5" x2="1315" y2="690.5" stroke="#3b3b3b" stroke-width="1"/><line x1="916" y1="738" x2="1315" y2="738" stroke="#3b3b3b" stroke-width="1"/><line x1="916" y1="785.5" x2="1315" y2="785.5" stroke="#3b3b3b" stroke-width="1"/><line x1="923.5" y1="595.5" x2="923.5" y2="793.5" stroke="#3b3b3b" stroke-width="1"/><line x1="934" y1="595.5" x2="934" y2="793.5" stroke="#3b3b3b" stroke-width="1"/><line x1="989.6" y1="595.5" x2="989.6" y2="793.5" stroke="#3b3b3b" stroke-width="1"/><line x1="1045.5" y1="595.5" x2="1045.5" y2="793.5" stroke="#3b3b3b" stroke-width="1"/><line x1="1101.4" y1="595.5" x2="1101.4" y2="793.5" stroke="#3b3b3b" stroke-width="1"/><line x1="1157.4" y1="595.5" x2="1157.4" y2="793.5" stroke="#3b3b3b" stroke-width="1"/><line x1="1212.9" y1="595.5" x2="1212.9" y2="793.5" stroke="#3b3b3b" stroke-width="1"/><line x1="1268.6" y1="595.5" x2="1268.6" y2="793.5" stroke="#3b3b3b" stroke-width="1"/><path d="M923.7,739.1 L925.1,740.9 L926.4,741.1 L927.8,741.1 L929.1,741.6 L930.5,742.1 L931.8,743.5 L933.1,743.6 L934.5,745.5 L935.7,749.8 L937.1,749.4 L938.6,748.9 L940.0,748.4 L941.5,748.3 L942.9,747.9 L944.3,749.3 L945.8,749.5 L947.2,749.6 L948.9,749.8 L950.7,750.9 L952.4,752.0 L954.1,749.0 L955.8,748.6 L957.5,747.2 L959.0,745.4 L960.4,745.4 L961.9,743.1 L963.3,742.5 L964.8,742.5 L966.2,740.2 L967.7,740.2 L969.2,739.5 L970.6,737.6 L972.1,737.1 L973.5,737.1 L975.0,736.1 L976.4,735.8 L977.9,734.1 L979.4,734.0 L980.8,731.3 L982.3,728.8 L983.7,727.5 L985.2,725.1 L986.6,723.2 L988.1,722.3 L989.6,720.4 L991.0,719.9 L992.5,718.9 L994.0,719.0 L995.5,718.9 L996.9,718.6 L998.4,716.7 L999.9,716.1 L1001.3,715.9 L1002.8,717.4 L1004.2,715.1 L1005.7,716.2 L1007.1,716.1 L1008.6,714.8 L1010.1,714.5 L1011.5,715.0 L1013.0,713.7 L1014.4,712.8 L1015.9,712.7 L1017.3,710.1 L1018.8,710.5 L1020.3,709.1 L1021.7,708.1 L1023.2,707.2 L1024.6,707.1 L1026.1,706.7 L1027.5,704.7 L1029.0,702.9 L1030.3,705.8 L1031.6,709.2 L1032.9,709.8 L1034.2,712.7 L1035.7,713.8 L1037.1,714.4 L1038.6,713.9 L1040.0,715.4 L1041.5,716.8 L1042.9,716.5 L1044.4,717.5 L1045.9,716.8 L1047.3,718.4 L1048.8,719.0 L1050.2,719.7 L1051.7,721.9 L1053.1,722.9 L1054.6,723.4 L1056.3,721.6 L1058.0,722.2 L1059.7,720.4 L1061.2,723.4 L1062.8,726.9 L1064.3,729.3 L1065.8,699.2 L1067.4,667.9 L1070.0,664.2 L1072.5,676.3 L1075.0,670.8 L1076.3,672.4 L1077.6,674.1 L1078.9,674.7 L1080.2,675.0 L1082.1,683.1 L1084.0,691.0 L1085.9,692.0 L1087.8,694.5 L1089.1,699.5 L1090.4,701.6 L1091.7,704.6 L1093.0,708.2 L1094.6,711.3 L1096.2,714.8 L1097.7,715.9 L1099.3,719.8 L1100.7,720.0 L1102.2,718.6 L1103.6,719.9 L1105.0,718.3 L1106.5,718.6 L1107.9,719.0 L1109.4,718.2 L1110.8,718.4 L1112.3,718.1 L1113.8,717.4 L1115.3,715.5 L1116.8,715.2 L1118.3,714.0 L1119.8,713.9 L1121.4,709.9 L1123.0,703.9 L1124.6,699.6 L1126.2,694.6 L1127.9,692.1 L1129.6,692.9 L1131.3,692.3 L1133.0,694.0 L1134.7,697.9 L1136.4,701.4 L1138.0,704.3 L1139.6,705.6 L1141.2,709.2 L1142.8,712.4 L1144.2,712.4 L1145.6,712.4 L1147.0,712.4 L1148.4,712.2 L1149.8,713.0 L1151.3,714.3 L1152.7,713.6 L1154.1,714.8 L1155.5,714.1 L1156.9,713.3 L1158.4,716.3 L1159.8,718.1 L1161.3,717.6 L1162.7,720.5 L1164.2,720.8 L1165.6,723.7 L1167.1,724.2 L1168.7,727.2 L1170.3,731.9 L1171.9,734.4 L1173.5,738.3 L1175.4,718.4 L1177.3,699.4 L1179.0,685.6 L1180.7,673.6 L1182.4,659.5 L1184.0,655.0 L1185.6,649.4 L1187.2,645.2 L1188.8,639.3 L1190.3,642.6 L1191.8,645.3 L1193.3,650.1 L1194.8,652.7 L1196.3,657.3 L1197.8,661.5 L1199.3,668.6 L1200.8,679.0 L1202.4,686.9 L1203.9,696.2 L1205.4,703.2 L1206.9,708.3 L1208.5,712.8 L1210.0,716.8 L1211.6,720.9 L1213.1,725.4 L1214.6,727.8 L1216.2,728.3 L1217.7,730.4 L1219.3,734.7 L1220.8,735.5 L1222.3,738.7 L1223.8,740.3 L1225.4,743.8 L1226.9,745.7 L1228.4,746.6 L1230.1,710.7 L1231.9,675.9 L1233.6,639.2 L1235.1,637.3 L1236.6,636.2 L1238.0,633.4 L1239.5,630.7 L1241.0,630.5 L1242.5,626.6 L1244.1,632.8 L1245.7,638.3 L1247.3,642.5 L1248.9,648.1 L1250.6,658.8 L1252.3,669.5 L1254.0,680.7 L1255.5,686.4 L1256.9,689.7 L1258.4,695.4 L1259.8,700.1 L1261.3,705.2 L1262.7,709.6 L1264.2,713.7 L1265.7,717.8 L1267.1,721.6 L1268.6,724.4 L1270.1,728.4 L1271.6,730.3 L1273.0,733.7 L1274.5,738.4 L1276.0,740.1 L1277.4,741.6 L1278.9,744.0 L1280.3,746.1 L1281.8,749.0 L1283.2,749.8 L1284.7,752.6 L1286.6,730.1 L1288.5,706.5 L1291.1,674.0 L1292.3,704.2 L1293.6,696.5 L1294.9,688.4 L1296.2,680.6 L1297.5,672.8 L1299.4,672.1 L1301.3,670.1 L1303.2,673.9 L1305.1,680.4 L1306.4,680.2 L1307.7,679.6 L1309.0,681.4 L1310.7,689.1 L1312.4,698.9 L1314.1,707.9" fill="none" stroke="#4a7db0" stroke-width="1.7" stroke-linejoin="round"/></svg>
<div class="t" style="top:540.06px;font-size:15.4px;color:#b0aca8;transform:scaleX(0.8144);transform-origin:0 0;left:888.5px;">THP_SENSOR_OUTSIDE_EAST THP_SENSOR_OUTSIDE_EAST_te…</div>
<div class="t" style="top:563.66px;font-size:15.4px;color:#b0aca8;transform:scaleX(0.8133);transform-origin:0 0;left:888.5px;">THP_SENSOR_OUTSIDE_WEST THP_SENSOR_OUTSIDE_WEST_te…</div>
<div class="t" style="top:588.39px;font-size:12.3px;color:#a6a6a6;right:1004.50px;">30</div>
<div class="t" style="top:635.89px;font-size:12.3px;color:#a6a6a6;right:1004.50px;">25</div>
<div class="t" style="top:683.39px;font-size:12.3px;color:#a6a6a6;right:1004.50px;">20</div>
<div class="t" style="top:730.89px;font-size:12.3px;color:#a6a6a6;right:1004.50px;">15</div>
<div class="t" style="top:778.39px;font-size:12.3px;color:#a6a6a6;right:1004.50px;">10</div>
<div class="t" style="top:796.89px;font-size:12.3px;color:#a6a6a6;transform:scaleX(0.9311);transform-origin:50% 0;left:634px;width:600px;text-align:center;">Sep 13</div>
<div class="t" style="top:796.89px;font-size:12.3px;color:#a6a6a6;transform:scaleX(0.9311);transform-origin:50% 0;left:689.6px;width:600px;text-align:center;">Sep 14</div>
<div class="t" style="top:796.89px;font-size:12.3px;color:#a6a6a6;transform:scaleX(0.9311);transform-origin:50% 0;left:745.5px;width:600px;text-align:center;">Sep 15</div>
<div class="t" style="top:796.89px;font-size:12.3px;color:#a6a6a6;transform:scaleX(0.9311);transform-origin:50% 0;left:801.4000000000001px;width:600px;text-align:center;">Sep 16</div>
<div class="t" style="top:796.89px;font-size:12.3px;color:#a6a6a6;transform:scaleX(0.9311);transform-origin:50% 0;left:857.4000000000001px;width:600px;text-align:center;">Sep 17</div>
<div class="t" style="top:796.89px;font-size:12.3px;color:#a6a6a6;transform:scaleX(0.9311);transform-origin:50% 0;left:912.9000000000001px;width:600px;text-align:center;">Sep 18</div>
<div class="t" style="top:796.89px;font-size:12.3px;color:#a6a6a6;transform:scaleX(0.9311);transform-origin:50% 0;left:968.5999999999999px;width:600px;text-align:center;">Sep 19</div>
<div class="abs" style="left:863px;top:682px;width:40px;height:16px;line-height:16px;text-align:center;font-size:12px;color:#a6a6a6;transform:rotate(-90deg);white-space:nowrap">°C</div>
<div class="abs" style="left:858px;top:830px;width:458px;height:1px;background:#333333"></div>
<svg class="abs" style="left:0;top:0;width:1917px;height:1449px" viewBox="0 0 1917 1449"><circle cx="874" cy="850" r="7.5" fill="#2f4356" stroke="#4f7fae" stroke-width="1.3"/><circle cx="874" cy="873.6" r="7.5" fill="#4a3152" stroke="#9c58b0" stroke-width="1.3"/><line x1="916" y1="897" x2="1315" y2="897" stroke="#3b3b3b" stroke-width="1"/><line x1="916" y1="928.75" x2="1315" y2="928.75" stroke="#3b3b3b" stroke-width="1"/><line x1="916" y1="960.5" x2="1315" y2="960.5" stroke="#3b3b3b" stroke-width="1"/><line x1="916" y1="992.25" x2="1315" y2="992.25" stroke="#3b3b3b" stroke-width="1"/><line x1="916" y1="1024" x2="1315" y2="1024" stroke="#3b3b3b" stroke-width="1"/><line x1="916" y1="1055.75" x2="1315" y2="1055.75" stroke="#3b3b3b" stroke-width="1"/><line x1="916" y1="1087.5" x2="1315" y2="1087.5" stroke="#3b3b3b" stroke-width="1"/><line x1="923.5" y1="897" x2="923.5" y2="1095.5" stroke="#3b3b3b" stroke-width="1"/><line x1="934" y1="897" x2="934" y2="1095.5" stroke="#3b3b3b" stroke-width="1"/><line x1="989.6" y1="897" x2="989.6" y2="1095.5" stroke="#3b3b3b" stroke-width="1"/><line x1="1045.5" y1="897" x2="1045.5" y2="1095.5" stroke="#3b3b3b" stroke-width="1"/><line x1="1101.4" y1="897" x2="1101.4" y2="1095.5" stroke="#3b3b3b" stroke-width="1"/><line x1="1157.4" y1="897" x2="1157.4" y2="1095.5" stroke="#3b3b3b" stroke-width="1"/><line x1="1212.9" y1="897" x2="1212.9" y2="1095.5" stroke="#3b3b3b" stroke-width="1"/><line x1="1268.6" y1="897" x2="1268.6" y2="1095.5" stroke="#3b3b3b" stroke-width="1"/><path d="M923.7,1008.3 L925.1,1009.6 L926.4,1009.4 L927.8,1011.0 L929.1,1012.5 L930.5,1013.1 L931.8,1012.9 L933.1,1014.2 L934.5,1014.9 L935.9,1014.4 L937.3,1015.0 L938.7,1016.1 L940.1,1017.8 L941.6,1018.8 L943.0,1018.5 L944.4,1020.7 L945.8,1021.1 L947.2,1021.7 L948.7,1022.3 L950.3,1022.0 L951.8,1023.6 L953.4,1024.9 L954.9,1023.6 L956.4,1026.3 L957.8,1027.2 L959.3,1029.4 L960.7,1030.1 L962.2,1032.3 L963.6,1033.0 L965.1,1034.2 L966.6,1036.1 L968.2,1038.5 L969.7,1041.6 L971.3,1042.4 L972.8,1044.7 L974.3,1044.8 L975.9,1045.2 L977.4,1047.1 L979.0,1046.1 L980.5,1047.5 L982.2,1047.4 L983.9,1046.1 L985.6,1046.7 L987.1,1047.4 L988.5,1048.0 L990.0,1047.2 L991.4,1049.6 L992.9,1050.5 L994.3,1051.3 L995.8,1051.0 L997.3,1050.5 L998.9,1050.0 L1000.4,1051.0 L1002.0,1051.0 L1003.5,1049.1 L1005.2,1049.6 L1006.9,1048.8 L1008.6,1047.9 L1010.2,1052.8 L1011.8,1055.2 L1013.4,1058.1 L1015.0,1062.2 L1016.7,1058.5 L1018.4,1054.4 L1020.1,1050.8 L1021.6,1048.8 L1023.1,1049.6 L1024.5,1048.5 L1026.0,1047.9 L1027.5,1048.1 L1029.0,1048.4 L1030.5,1046.0 L1032.1,1045.3 L1033.6,1044.7 L1035.2,1045.3 L1036.7,1042.6 L1038.2,1045.7 L1039.6,1046.6 L1041.1,1048.6 L1042.5,1050.6 L1044.0,1052.7 L1045.4,1055.5 L1046.9,1057.7 L1048.4,1060.3 L1049.8,1060.8 L1051.3,1062.5 L1052.8,1063.7 L1054.3,1064.8 L1055.7,1067.1 L1057.2,1069.5 L1058.7,1065.3 L1060.1,1059.0 L1061.6,1056.4 L1063.0,1051.2 L1064.5,1045.7 L1065.9,1042.1 L1067.4,1037.2 L1068.9,1033.1 L1070.4,1031.8 L1072.0,1027.6 L1073.5,1025.7 L1075.0,1022.5 L1076.5,1020.5 L1078.1,1018.2 L1079.6,1017.4 L1081.2,1015.6 L1082.7,1015.9 L1084.2,1012.0 L1085.8,1010.9 L1087.3,1008.7 L1088.9,1006.1 L1090.4,1001.8 L1092.1,1003.4 L1093.8,1004.6 L1095.5,1006.9 L1097.0,1005.0 L1098.6,1004.6 L1100.1,1004.7 L1101.7,1005.1 L1103.2,1004.1 L1104.7,1006.3 L1106.2,1010.2 L1107.7,1013.6 L1109.1,1015.6 L1110.6,1019.6 L1112.1,1022.7 L1113.6,1023.0 L1115.1,1022.9 L1116.6,1021.0 L1118.1,1021.0 L1119.6,1021.4 L1121.1,1021.3 L1122.6,1021.9 L1124.1,1022.7 L1125.7,1023.4 L1127.2,1025.0 L1128.7,1026.5 L1130.2,1023.3 L1131.6,1018.7 L1133.1,1015.9 L1134.6,1011.9 L1136.1,1008.4 L1137.5,1005.5 L1139.0,1002.2 L1140.5,999.3 L1141.9,997.4 L1143.4,993.7 L1144.8,992.6 L1146.3,989.9 L1147.7,987.2 L1149.2,986.9 L1150.6,984.4 L1152.0,982.9 L1153.4,980.9 L1154.8,979.9 L1156.2,978.7 L1157.5,978.0 L1158.9,976.4 L1160.3,975.1 L1161.7,973.0 L1163.1,972.8 L1164.5,971.4 L1165.9,967.8 L1167.3,965.0 L1168.7,963.9 L1170.1,960.2 L1171.5,959.2 L1173.0,955.3 L1174.4,953.8 L1175.8,951.2 L1177.2,949.5 L1178.6,945.3 L1180.0,946.6 L1181.4,945.6 L1182.8,945.4 L1184.1,945.6 L1185.5,945.8 L1186.9,944.9 L1188.3,946.4 L1189.7,945.3 L1191.0,944.8 L1192.4,945.1 L1193.8,945.6 L1195.2,944.1 L1196.6,942.8 L1198.0,941.0 L1199.5,940.6 L1200.9,937.8 L1202.3,935.8 L1203.7,935.0 L1205.2,931.3 L1206.6,930.1 L1208.0,929.1 L1209.4,928.2 L1210.8,928.2 L1212.3,928.3 L1213.7,926.0 L1215.1,927.1 L1216.5,926.5 L1218.0,925.8 L1219.4,924.2 L1220.8,925.4 L1222.3,925.7 L1223.8,924.9 L1225.4,926.1 L1226.9,925.7 L1228.4,926.7 L1230.3,924.0 L1232.3,920.8 L1233.7,922.7 L1235.2,921.7 L1236.6,922.6 L1238.0,922.0 L1239.5,922.9 L1240.9,922.6 L1242.4,922.7 L1243.8,923.1 L1245.3,925.2 L1246.8,927.6 L1248.4,928.1 L1249.9,929.7 L1251.4,931.8 L1252.9,932.7 L1254.5,930.9 L1256.0,931.5 L1257.6,932.3 L1259.1,930.7 L1260.8,927.6 L1262.5,924.2 L1264.2,923.1 L1265.7,923.8 L1267.3,926.3 L1268.8,927.2 L1270.4,929.8 L1271.9,931.5 L1273.3,932.8 L1274.7,933.7 L1276.2,934.4 L1277.6,933.7 L1279.0,934.4 L1280.4,934.4 L1281.9,934.3 L1283.3,936.5 L1284.7,936.5 L1286.2,934.9 L1287.7,933.4 L1289.3,933.0 L1290.8,931.7 L1292.3,930.4 L1293.8,932.3 L1295.2,933.4 L1296.7,934.3 L1298.2,935.0 L1299.7,937.2 L1301.1,938.7 L1302.6,939.3 L1304.0,938.3 L1305.5,938.7 L1306.9,938.1 L1308.3,938.3 L1309.8,937.1 L1311.2,936.3 L1312.7,936.1 L1314.1,936.2" fill="none" stroke="#4a7db0" stroke-width="1.7" stroke-linejoin="round"/></svg>
<div class="t" style="top:842.06px;font-size:15.4px;color:#b0aca8;transform:scaleX(0.8142);transform-origin:0 0;left:888.5px;">THP_SENSOR_OUTSIDE_EAST THP_SENSOR_OUTSIDE_EAST_pre…</div>
<div class="t" style="top:865.66px;font-size:15.4px;color:#b0aca8;transform:scaleX(0.8119);transform-origin:0 0;left:888.5px;">THP_SENSOR_OUTSIDE_WEST THP_SENSOR_OUTSIDE_WEST_pr…</div>
<div class="t" style="top:889.89px;font-size:12.3px;color:#a6a6a6;right:1004.50px;">1,000</div>
<div class="t" style="top:921.64px;font-size:12.3px;color:#a6a6a6;right:1004.50px;">995</div>
<div class="t" style="top:953.39px;font-size:12.3px;color:#a6a6a6;right:1004.50px;">990</div>
<div class="t" style="top:985.14px;font-size:12.3px;color:#a6a6a6;right:1004.50px;">985</div>
<div class="t" style="top:1016.89px;font-size:12.3px;color:#a6a6a6;right:1004.50px;">980</div>
<div class="t" style="top:1048.64px;font-size:12.3px;color:#a6a6a6;right:1004.50px;">975</div>
<div class="t" style="top:1080.39px;font-size:12.3px;color:#a6a6a6;right:1004.50px;">970</div>
<div class="t" style="top:1098.59px;font-size:12.3px;color:#a6a6a6;transform:scaleX(0.9311);transform-origin:50% 0;left:634px;width:600px;text-align:center;">Sep 13</div>
<div class="t" style="top:1098.59px;font-size:12.3px;color:#a6a6a6;transform:scaleX(0.9311);transform-origin:50% 0;left:689.6px;width:600px;text-align:center;">Sep 14</div>
<div class="t" style="top:1098.59px;font-size:12.3px;color:#a6a6a6;transform:scaleX(0.9311);transform-origin:50% 0;left:745.5px;width:600px;text-align:center;">Sep 15</div>
<div class="t" style="top:1098.59px;font-size:12.3px;color:#a6a6a6;transform:scaleX(0.9311);transform-origin:50% 0;left:801.4000000000001px;width:600px;text-align:center;">Sep 16</div>
<div class="t" style="top:1098.59px;font-size:12.3px;color:#a6a6a6;transform:scaleX(0.9311);transform-origin:50% 0;left:857.4000000000001px;width:600px;text-align:center;">Sep 17</div>
<div class="t" style="top:1098.59px;font-size:12.3px;color:#a6a6a6;transform:scaleX(0.9311);transform-origin:50% 0;left:912.9000000000001px;width:600px;text-align:center;">Sep 18</div>
<div class="t" style="top:1098.59px;font-size:12.3px;color:#a6a6a6;transform:scaleX(0.9311);transform-origin:50% 0;left:968.5999999999999px;width:600px;text-align:center;">Sep 19</div>
<div class="abs" style="left:847.5px;top:984px;width:40px;height:16px;line-height:16px;text-align:center;font-size:12px;color:#a6a6a6;transform:rotate(-90deg);white-space:nowrap">hPa</div>
<svg class="abs" style="left:341px;top:529px;width:492px;height:278px" viewBox="0 0 492 278"><defs><filter id="b3" x="-20%" y="-20%" width="140%" height="140%"><feGaussianBlur stdDeviation="3"/></filter><filter id="b6" x="-20%" y="-20%" width="140%" height="140%"><feGaussianBlur stdDeviation="4"/></filter><filter id="b1"><feGaussianBlur stdDeviation="0.7"/></filter><clipPath id="cc"><rect x="0" y="0" width="492" height="278" rx="12" ry="12"/></clipPath></defs><g clip-path="url(#cc)"><rect x="0" y="0" width="492" height="278" fill="#262626"/><g filter="url(#b6)"><polygon points="0,0 165,0 150,25 95,52 0,62" fill="#141414"/><polygon points="0,0 22,0 0,38" fill="#343434"/><polygon points="0,58 110,56 120,100 105,190 0,195" fill="#222222"/><polygon points="160,0 265,0 265,37 308,48 305,62 100,62 130,40 158,28" fill="#484848"/><polygon points="215,10 265,10 265,37 300,48 240,45 225,30" fill="#5a5a5a"/><polygon points="165,0 215,0 195,26 162,30" fill="#8a8a8a"/><polygon points="85,56 160,30 175,45 100,62" fill="#3e3e3e"/><polygon points="100,60 305,60 300,66 105,66" fill="#505050"/><polygon points="108,66 272,64 275,100 112,100" fill="#3c3c3c"/><polygon points="303,44 372,44 368,182 300,182 292,120" fill="#555555"/><polygon points="376,48 421,52 421,76 376,76" fill="#b0b0b0"/><polygon points="418,56 482,62 485,76 418,76" fill="#1a1a1a"/><polygon points="408,0 450,0 470,60 376,48 408,37" fill="#222222"/><polygon points="425,0 450,0 492,55 492,75 480,72" fill="#4a4a4a"/><polygon points="115,100 300,100 305,178 120,182 100,150" fill="#363636"/><polygon points="150,112 285,108 292,172 165,178 140,150" fill="#404040"/><polygon points="95,105 150,100 160,175 110,185 90,150" fill="#2e2e2e"/><polygon points="245,150 300,140 320,185 250,185" fill="#454545"/><polygon points="385,178 492,176 492,278 385,278" fill="#2a2a2a"/><polygon points="0,195 40,186 75,278 0,278" fill="#262626"/></g><g filter="url(#b1)"><ellipse cx="182.4" cy="85.7" rx="4.8" ry="3.3" fill="#3a3a3a"/><ellipse cx="182.3" cy="93.9" rx="2.6" ry="1.8" fill="#3a3a3a"/><ellipse cx="210.8" cy="92.2" rx="2.3" ry="1.6" fill="#828282"/><ellipse cx="132.7" cy="85.1" rx="4.7" ry="3.3" fill="#747474"/><ellipse cx="205.3" cy="81.1" rx="3.4" ry="2.4" fill="#666666"/><ellipse cx="209.7" cy="93.3" rx="2.2" ry="1.5" fill="#747474"/><ellipse cx="140.4" cy="76.8" rx="2.1" ry="1.5" fill="#3a3a3a"/><ellipse cx="162.2" cy="86.5" rx="2.6" ry="1.8" fill="#666666"/><ellipse cx="212.4" cy="84.0" rx="4.0" ry="2.8" fill="#3a3a3a"/><ellipse cx="214.8" cy="81.4" rx="3.7" ry="2.6" fill="#747474"/><ellipse cx="223.2" cy="78.8" rx="2.7" ry="1.9" fill="#828282"/><ellipse cx="114.8" cy="85.8" rx="2.3" ry="1.6" fill="#747474"/><ellipse cx="245.5" cy="80.8" rx="4.9" ry="3.4" fill="#747474"/><ellipse cx="144.2" cy="96.0" rx="2.2" ry="1.5" fill="#3a3a3a"/><ellipse cx="266.9" cy="81.1" rx="2.2" ry="1.6" fill="#666666"/><ellipse cx="234.6" cy="77.6" rx="2.3" ry="1.6" fill="#828282"/><ellipse cx="112.4" cy="81.5" rx="4.8" ry="3.3" fill="#666666"/><ellipse cx="149.4" cy="72.8" rx="2.2" ry="1.5" fill="#3a3a3a"/><ellipse cx="138.4" cy="85.7" rx="3.3" ry="2.3" fill="#666666"/><ellipse cx="267.6" cy="91.5" rx="3.3" ry="2.3" fill="#3a3a3a"/><ellipse cx="128.6" cy="81.8" rx="2.6" ry="1.8" fill="#828282"/><ellipse cx="248.3" cy="97.3" rx="3.8" ry="2.6" fill="#747474"/><ellipse cx="143.7" cy="81.0" rx="4.6" ry="3.2" fill="#747474"/><ellipse cx="116.7" cy="74.1" rx="3.3" ry="2.3" fill="#747474"/><ellipse cx="233.6" cy="79.2" rx="2.9" ry="2.0" fill="#747474"/><ellipse cx="121.9" cy="75.8" rx="3.9" ry="2.7" fill="#747474"/><ellipse cx="206.2" cy="80.4" rx="3.4" ry="2.4" fill="#3a3a3a"/><ellipse cx="243.2" cy="73.8" rx="3.2" ry="2.2" fill="#666666"/><ellipse cx="159.7" cy="76.4" rx="3.8" ry="2.7" fill="#666666"/><ellipse cx="135.4" cy="87.6" rx="3.7" ry="2.6" fill="#3a3a3a"/><ellipse cx="251.2" cy="86.9" rx="3.3" ry="2.3" fill="#747474"/><ellipse cx="127.4" cy="84.3" rx="2.8" ry="1.9" fill="#3a3a3a"/><ellipse cx="151.1" cy="93.1" rx="3.8" ry="2.7" fill="#828282"/><ellipse cx="193.2" cy="96.0" rx="4.9" ry="3.5" fill="#666666"/><ellipse cx="146.5" cy="85.7" rx="4.6" ry="3.2" fill="#747474"/><ellipse cx="154.8" cy="95.7" rx="2.6" ry="1.8" fill="#747474"/><ellipse cx="121.1" cy="81.5" rx="2.7" ry="1.9" fill="#747474"/><ellipse cx="138.2" cy="80.3" rx="3.7" ry="2.6" fill="#666666"/><ellipse cx="124.8" cy="73.9" rx="3.4" ry="2.3" fill="#828282"/><ellipse cx="215.1" cy="89.4" rx="3.8" ry="2.6" fill="#666666"/><ellipse cx="204.4" cy="95.9" rx="3.4" ry="2.4" fill="#828282"/><ellipse cx="222.2" cy="97.0" rx="2.1" ry="1.4" fill="#747474"/><ellipse cx="187.2" cy="90.5" rx="3.0" ry="2.1" fill="#747474"/><ellipse cx="122.0" cy="85.3" rx="4.2" ry="2.9" fill="#666666"/><ellipse cx="236.9" cy="95.6" rx="3.1" ry="2.1" fill="#3a3a3a"/><ellipse cx="254.1" cy="94.4" rx="3.3" ry="2.3" fill="#747474"/><ellipse cx="248.2" cy="86.0" rx="3.9" ry="2.7" fill="#3a3a3a"/><ellipse cx="170.7" cy="70.3" rx="2.2" ry="1.6" fill="#747474"/><ellipse cx="212.3" cy="97.8" rx="4.6" ry="3.2" fill="#828282"/><ellipse cx="172.1" cy="90.6" rx="3.7" ry="2.6" fill="#3a3a3a"/><ellipse cx="184.0" cy="85.2" rx="3.6" ry="2.5" fill="#747474"/><ellipse cx="159.6" cy="72.5" rx="2.1" ry="1.4" fill="#747474"/><ellipse cx="189.6" cy="87.2" rx="4.8" ry="3.3" fill="#828282"/><ellipse cx="253.4" cy="80.3" rx="2.4" ry="1.7" fill="#666666"/><ellipse cx="192.9" cy="91.1" rx="3.0" ry="2.1" fill="#3a3a3a"/><ellipse cx="189.7" cy="76.8" rx="3.2" ry="2.2" fill="#828282"/><ellipse cx="141.8" cy="82.1" rx="4.4" ry="3.1" fill="#666666"/><ellipse cx="250.8" cy="80.8" rx="3.7" ry="2.6" fill="#828282"/><ellipse cx="143.6" cy="73.8" rx="3.1" ry="2.1" fill="#747474"/><ellipse cx="223.8" cy="96.6" rx="2.8" ry="2.0" fill="#666666"/><ellipse cx="128.1" cy="83.2" rx="4.8" ry="3.3" fill="#3a3a3a"/><ellipse cx="171.2" cy="84.6" rx="4.0" ry="2.8" fill="#3a3a3a"/><ellipse cx="161.3" cy="93.2" rx="2.8" ry="2.0" fill="#747474"/><ellipse cx="218.5" cy="77.9" rx="3.1" ry="2.1" fill="#747474"/><ellipse cx="212.6" cy="81.3" rx="2.6" ry="1.8" fill="#828282"/><ellipse cx="148.0" cy="73.9" rx="2.1" ry="1.5" fill="#747474"/><ellipse cx="181.4" cy="87.6" rx="4.0" ry="2.8" fill="#828282"/><ellipse cx="263.4" cy="89.2" rx="2.6" ry="1.8" fill="#3a3a3a"/><ellipse cx="151.0" cy="90.0" rx="4.3" ry="3.0" fill="#747474"/><ellipse cx="138.7" cy="77.6" rx="3.0" ry="2.1" fill="#666666"/><ellipse cx="173.0" cy="92.2" rx="4.7" ry="3.3" fill="#747474"/><ellipse cx="175.7" cy="95.0" rx="3.2" ry="2.2" fill="#3a3a3a"/><ellipse cx="182.6" cy="87.5" rx="4.7" ry="3.3" fill="#3a3a3a"/><ellipse cx="198.0" cy="88.3" rx="3.5" ry="2.5" fill="#828282"/><ellipse cx="184.2" cy="88.2" rx="2.6" ry="1.8" fill="#747474"/><ellipse cx="144.1" cy="95.2" rx="4.9" ry="3.5" fill="#828282"/><ellipse cx="195.9" cy="92.1" rx="3.0" ry="2.1" fill="#747474"/><ellipse cx="165.8" cy="72.3" rx="3.3" ry="2.3" fill="#3a3a3a"/><ellipse cx="232.9" cy="83.6" rx="2.1" ry="1.5" fill="#747474"/><ellipse cx="178.6" cy="71.0" rx="3.6" ry="2.5" fill="#666666"/><ellipse cx="185.3" cy="98.0" rx="4.7" ry="3.3" fill="#3a3a3a"/><ellipse cx="261.3" cy="83.8" rx="4.8" ry="3.4" fill="#747474"/><ellipse cx="231.3" cy="82.3" rx="3.7" ry="2.6" fill="#666666"/><ellipse cx="193.6" cy="93.6" rx="3.7" ry="2.6" fill="#828282"/><ellipse cx="217.4" cy="96.7" rx="4.6" ry="3.2" fill="#666666"/><ellipse cx="158.7" cy="74.0" rx="3.6" ry="2.5" fill="#828282"/><ellipse cx="201.7" cy="75.6" rx="3.6" ry="2.5" fill="#747474"/><ellipse cx="206.8" cy="70.8" rx="4.9" ry="3.4" fill="#3a3a3a"/><ellipse cx="197.0" cy="97.7" rx="2.4" ry="1.7" fill="#747474"/><ellipse cx="220.6" cy="71.8" rx="3.6" ry="2.5" fill="#3a3a3a"/><ellipse cx="257.3" cy="92.4" rx="3.2" ry="2.2" fill="#666666"/><ellipse cx="185.7" cy="73.6" rx="3.3" ry="2.3" fill="#3a3a3a"/><ellipse cx="194.0" cy="73.0" rx="3.3" ry="2.3" fill="#747474"/><ellipse cx="258.0" cy="73.6" rx="4.3" ry="3.0" fill="#747474"/><ellipse cx="115.7" cy="74.4" rx="2.0" ry="1.4" fill="#828282"/><ellipse cx="161.5" cy="79.9" rx="3.9" ry="2.7" fill="#747474"/><ellipse cx="189.9" cy="86.3" rx="4.6" ry="3.2" fill="#828282"/><ellipse cx="224.8" cy="89.6" rx="4.6" ry="3.2" fill="#747474"/><ellipse cx="170.1" cy="81.6" rx="3.6" ry="2.5" fill="#666666"/><ellipse cx="196.1" cy="94.2" rx="3.6" ry="2.5" fill="#666666"/><ellipse cx="194.7" cy="93.8" rx="3.8" ry="2.7" fill="#666666"/><ellipse cx="147.2" cy="90.7" rx="4.4" ry="3.1" fill="#666666"/><ellipse cx="160.5" cy="78.8" rx="4.8" ry="3.3" fill="#666666"/><ellipse cx="234.5" cy="75.4" rx="2.3" ry="1.6" fill="#666666"/><ellipse cx="131.2" cy="72.5" rx="3.2" ry="2.2" fill="#3a3a3a"/><ellipse cx="243.1" cy="81.8" rx="4.4" ry="3.1" fill="#666666"/><ellipse cx="142.1" cy="87.6" rx="4.4" ry="3.1" fill="#747474"/><ellipse cx="142.1" cy="89.1" rx="4.7" ry="3.3" fill="#828282"/><ellipse cx="128.5" cy="84.2" rx="4.3" ry="3.0" fill="#666666"/><ellipse cx="238.5" cy="83.5" rx="2.1" ry="1.5" fill="#3a3a3a"/><ellipse cx="308.6" cy="70.8" rx="1.8" ry="2.6" fill="#4a4a4a"/><ellipse cx="369.3" cy="174.8" rx="1.6" ry="2.3" fill="#6a6a6a"/><ellipse cx="307.7" cy="140.3" rx="1.6" ry="2.2" fill="#6a6a6a"/><ellipse cx="321.5" cy="110.4" rx="2.5" ry="3.5" fill="#3e3e3e"/><ellipse cx="313.1" cy="97.2" rx="2.7" ry="3.9" fill="#6a6a6a"/><ellipse cx="358.8" cy="70.4" rx="2.4" ry="3.4" fill="#626262"/><ellipse cx="327.2" cy="72.3" rx="1.7" ry="2.5" fill="#6a6a6a"/><ellipse cx="321.3" cy="56.9" rx="3.2" ry="4.5" fill="#3e3e3e"/><ellipse cx="339.0" cy="71.7" rx="2.6" ry="3.8" fill="#626262"/><ellipse cx="355.9" cy="81.2" rx="3.3" ry="4.7" fill="#4a4a4a"/><ellipse cx="356.7" cy="101.8" rx="3.3" ry="4.7" fill="#626262"/><ellipse cx="353.2" cy="152.1" rx="2.3" ry="3.2" fill="#4a4a4a"/><ellipse cx="303.1" cy="92.8" rx="2.4" ry="3.4" fill="#6a6a6a"/><ellipse cx="361.9" cy="183.7" rx="3.3" ry="4.7" fill="#6a6a6a"/><ellipse cx="314.7" cy="177.3" rx="2.8" ry="4.0" fill="#626262"/><ellipse cx="313.6" cy="101.9" rx="1.8" ry="2.5" fill="#6a6a6a"/><ellipse cx="326.1" cy="185.0" rx="2.7" ry="3.9" fill="#6a6a6a"/><ellipse cx="352.8" cy="182.2" rx="1.4" ry="2.1" fill="#6a6a6a"/><ellipse cx="351.2" cy="80.9" rx="2.2" ry="3.2" fill="#6a6a6a"/><ellipse cx="352.8" cy="135.7" rx="1.4" ry="2.0" fill="#626262"/><ellipse cx="316.1" cy="171.8" rx="2.6" ry="3.7" fill="#3e3e3e"/><ellipse cx="367.6" cy="124.5" rx="3.5" ry="5.0" fill="#3e3e3e"/><ellipse cx="356.3" cy="55.7" rx="2.7" ry="3.8" fill="#6a6a6a"/><ellipse cx="325.8" cy="176.4" rx="2.2" ry="3.2" fill="#4a4a4a"/><ellipse cx="359.6" cy="120.9" rx="2.7" ry="3.8" fill="#3e3e3e"/><ellipse cx="366.1" cy="103.9" rx="2.5" ry="3.6" fill="#626262"/><ellipse cx="324.3" cy="85.0" rx="2.8" ry="4.0" fill="#626262"/><ellipse cx="345.8" cy="149.7" rx="1.5" ry="2.1" fill="#4a4a4a"/><ellipse cx="340.2" cy="133.6" rx="2.3" ry="3.2" fill="#3e3e3e"/><ellipse cx="301.8" cy="89.1" rx="2.2" ry="3.2" fill="#626262"/><ellipse cx="303.3" cy="171.8" rx="2.3" ry="3.3" fill="#3e3e3e"/><ellipse cx="316.1" cy="150.8" rx="1.5" ry="2.1" fill="#6a6a6a"/><ellipse cx="365.5" cy="146.2" rx="2.4" ry="3.4" fill="#4a4a4a"/><ellipse cx="341.5" cy="61.1" rx="2.7" ry="3.9" fill="#3e3e3e"/><ellipse cx="306.5" cy="165.6" rx="2.1" ry="3.1" fill="#4a4a4a"/><ellipse cx="307.0" cy="107.0" rx="2.8" ry="4.0" fill="#3e3e3e"/><ellipse cx="341.3" cy="134.5" rx="2.8" ry="4.0" fill="#626262"/><ellipse cx="354.0" cy="119.3" rx="3.5" ry="5.0" fill="#626262"/><ellipse cx="350.9" cy="78.4" rx="1.6" ry="2.3" fill="#626262"/><ellipse cx="354.5" cy="132.5" rx="2.2" ry="3.1" fill="#626262"/><ellipse cx="341.9" cy="146.5" rx="2.9" ry="4.1" fill="#4a4a4a"/><ellipse cx="343.6" cy="150.5" rx="1.8" ry="2.6" fill="#4a4a4a"/><ellipse cx="334.2" cy="136.4" rx="1.8" ry="2.6" fill="#6a6a6a"/><ellipse cx="343.2" cy="46.3" rx="1.9" ry="2.8" fill="#6a6a6a"/><ellipse cx="342.9" cy="59.3" rx="2.5" ry="3.6" fill="#6a6a6a"/><ellipse cx="352.4" cy="172.8" rx="1.7" ry="2.5" fill="#4a4a4a"/><ellipse cx="343.4" cy="97.2" rx="2.4" ry="3.4" fill="#4a4a4a"/><ellipse cx="322.4" cy="114.2" rx="1.7" ry="2.4" fill="#6a6a6a"/><ellipse cx="355.8" cy="107.6" rx="3.1" ry="4.5" fill="#4a4a4a"/><ellipse cx="330.0" cy="149.6" rx="2.2" ry="3.2" fill="#4a4a4a"/><ellipse cx="324.6" cy="136.5" rx="3.5" ry="5.0" fill="#626262"/><ellipse cx="318.9" cy="151.3" rx="3.1" ry="4.5" fill="#4a4a4a"/><ellipse cx="328.8" cy="96.7" rx="1.6" ry="2.3" fill="#626262"/><ellipse cx="303.7" cy="56.6" rx="2.6" ry="3.7" fill="#3e3e3e"/><ellipse cx="356.7" cy="109.9" rx="3.1" ry="4.5" fill="#6a6a6a"/><ellipse cx="303.5" cy="74.9" rx="2.8" ry="4.0" fill="#6a6a6a"/><ellipse cx="348.0" cy="114.3" rx="3.0" ry="4.3" fill="#626262"/><ellipse cx="318.4" cy="65.0" rx="2.2" ry="3.1" fill="#626262"/><ellipse cx="324.4" cy="61.4" rx="2.9" ry="4.1" fill="#626262"/><ellipse cx="329.5" cy="157.4" rx="2.0" ry="2.9" fill="#626262"/><ellipse cx="313.9" cy="180.5" rx="2.9" ry="4.2" fill="#4a4a4a"/><ellipse cx="304.1" cy="161.0" rx="1.5" ry="2.1" fill="#3e3e3e"/><ellipse cx="340.1" cy="156.5" rx="3.0" ry="4.2" fill="#626262"/><ellipse cx="355.4" cy="120.7" rx="3.2" ry="4.5" fill="#4a4a4a"/><ellipse cx="310.7" cy="151.3" rx="3.2" ry="4.6" fill="#626262"/><ellipse cx="356.5" cy="76.0" rx="1.5" ry="2.2" fill="#4a4a4a"/><ellipse cx="338.9" cy="180.3" rx="2.8" ry="4.0" fill="#3e3e3e"/><ellipse cx="302.6" cy="121.6" rx="3.1" ry="4.4" fill="#6a6a6a"/><ellipse cx="322.1" cy="83.3" rx="1.6" ry="2.3" fill="#626262"/><ellipse cx="304.1" cy="133.8" rx="1.7" ry="2.4" fill="#3e3e3e"/></g><g filter="url(#b1)"><polygon points="40,186 444,188 425,228 67,228" fill="#8e8e8e"/><line x1="45" y1="192" x2="440.0" y2="192" stroke="#b4b4b4" stroke-width="1.6"/><line x1="48" y1="197" x2="437.5" y2="197" stroke="#b4b4b4" stroke-width="1.6"/><line x1="51" y1="202" x2="435.0" y2="202" stroke="#b4b4b4" stroke-width="1.6"/><line x1="54" y1="207" x2="432.5" y2="207" stroke="#b4b4b4" stroke-width="1.6"/><line x1="57" y1="212" x2="430.0" y2="212" stroke="#b4b4b4" stroke-width="1.6"/><line x1="60" y1="217" x2="427.5" y2="217" stroke="#b4b4b4" stroke-width="1.6"/><line x1="63" y1="222" x2="425.0" y2="222" stroke="#b4b4b4" stroke-width="1.6"/><line x1="66" y1="227" x2="422.5" y2="227" stroke="#b4b4b4" stroke-width="1.6"/><polygon points="67,228 425,228 380,256 95,256" fill="#606060"/><line x1="70" y1="231.0" x2="420" y2="231.0" stroke="#7c7c7c" stroke-width="1.5"/><line x1="75" y1="235.2" x2="413" y2="235.2" stroke="#7c7c7c" stroke-width="1.5"/><line x1="80" y1="239.4" x2="406" y2="239.4" stroke="#7c7c7c" stroke-width="1.5"/><line x1="85" y1="243.6" x2="399" y2="243.6" stroke="#7c7c7c" stroke-width="1.5"/><line x1="90" y1="247.8" x2="392" y2="247.8" stroke="#7c7c7c" stroke-width="1.5"/><line x1="95" y1="252.0" x2="385" y2="252.0" stroke="#7c7c7c" stroke-width="1.5"/><line x1="2" y1="205" x2="35" y2="278" stroke="#555555" stroke-width="2"/><line x1="11" y1="208" x2="45" y2="278" stroke="#555555" stroke-width="2"/><line x1="20" y1="211" x2="55" y2="278" stroke="#555555" stroke-width="2"/><line x1="29" y1="214" x2="65" y2="278" stroke="#555555" stroke-width="2"/><line x1="38" y1="217" x2="75" y2="278" stroke="#555555" stroke-width="2"/><path d="M15,183 Q230,198 444,187" stroke="#cfcfcf" stroke-width="4" fill="none"/></g><g filter="url(#b1)"><ellipse cx="142.0" cy="213.3" rx="5.8" ry="5.0" fill="#f2f2f2" opacity="0.9"/><ellipse cx="200.8" cy="224.3" rx="6.5" ry="5.5" fill="#f2f2f2" opacity="0.9"/><ellipse cx="237.8" cy="227.7" rx="6.3" ry="5.3" fill="#d6d6d6" opacity="0.9"/><ellipse cx="207.2" cy="249.7" rx="7.3" ry="6.2" fill="#9a9a9a" opacity="0.9"/><ellipse cx="374.4" cy="260.4" rx="6.4" ry="5.4" fill="#7a7a7a" opacity="0.9"/><ellipse cx="188.0" cy="177.9" rx="7.7" ry="6.5" fill="#e8e8e8" opacity="0.9"/><ellipse cx="142.1" cy="206.3" rx="6.6" ry="5.6" fill="#c2c2c2" opacity="0.9"/><ellipse cx="125.7" cy="187.8" rx="7.9" ry="6.7" fill="#d6d6d6" opacity="0.9"/><ellipse cx="231.2" cy="188.4" rx="4.2" ry="3.6" fill="#e8e8e8" opacity="0.9"/><ellipse cx="405.3" cy="172.9" rx="5.7" ry="4.8" fill="#d6d6d6" opacity="0.9"/><ellipse cx="168.5" cy="191.4" rx="6.1" ry="5.2" fill="#a0a0a0" opacity="0.9"/><ellipse cx="328.3" cy="184.1" rx="4.3" ry="3.7" fill="#c2c2c2" opacity="0.9"/><ellipse cx="204.0" cy="259.7" rx="6.3" ry="5.4" fill="#7a7a7a" opacity="0.9"/><ellipse cx="234.4" cy="219.9" rx="7.6" ry="6.5" fill="#c2c2c2" opacity="0.9"/><ellipse cx="305.8" cy="177.0" rx="7.4" ry="6.3" fill="#f2f2f2" opacity="0.9"/><ellipse cx="64.6" cy="254.7" rx="5.2" ry="4.4" fill="#7a7a7a" opacity="0.9"/><ellipse cx="358.9" cy="214.5" rx="3.8" ry="3.2" fill="#e8e8e8" opacity="0.9"/><ellipse cx="397.4" cy="258.5" rx="5.5" ry="4.7" fill="#8a8a8a" opacity="0.9"/><ellipse cx="326.7" cy="180.5" rx="4.2" ry="3.6" fill="#c2c2c2" opacity="0.9"/><ellipse cx="102.2" cy="255.0" rx="4.1" ry="3.5" fill="#7a7a7a" opacity="0.9"/><ellipse cx="437.3" cy="200.9" rx="4.2" ry="3.6" fill="#e8e8e8" opacity="0.9"/><ellipse cx="45.5" cy="256.3" rx="7.2" ry="6.1" fill="#8a8a8a" opacity="0.9"/><ellipse cx="183.9" cy="200.5" rx="7.5" ry="6.4" fill="#f2f2f2" opacity="0.9"/><ellipse cx="77.7" cy="201.3" rx="5.8" ry="4.9" fill="#d6d6d6" opacity="0.9"/><ellipse cx="356.8" cy="221.5" rx="3.9" ry="3.3" fill="#f2f2f2" opacity="0.9"/><ellipse cx="127.3" cy="200.4" rx="4.2" ry="3.6" fill="#c2c2c2" opacity="0.9"/><ellipse cx="169.9" cy="202.0" rx="8.0" ry="6.8" fill="#d6d6d6" opacity="0.9"/><ellipse cx="187.1" cy="177.7" rx="5.3" ry="4.5" fill="#f2f2f2" opacity="0.9"/><ellipse cx="339.9" cy="178.6" rx="5.5" ry="4.7" fill="#f2f2f2" opacity="0.9"/><ellipse cx="326.1" cy="187.8" rx="4.0" ry="3.4" fill="#d6d6d6" opacity="0.9"/><ellipse cx="383.1" cy="251.6" rx="7.6" ry="6.4" fill="#8a8a8a" opacity="0.9"/><ellipse cx="159.7" cy="201.1" rx="4.8" ry="4.1" fill="#c2c2c2" opacity="0.9"/><ellipse cx="343.2" cy="176.7" rx="4.3" ry="3.7" fill="#f2f2f2" opacity="0.9"/><ellipse cx="333.9" cy="223.0" rx="6.0" ry="5.1" fill="#c2c2c2" opacity="0.9"/><ellipse cx="221.5" cy="177.5" rx="6.3" ry="5.4" fill="#e8e8e8" opacity="0.9"/><ellipse cx="312.7" cy="181.7" rx="5.3" ry="4.5" fill="#f2f2f2" opacity="0.9"/><ellipse cx="279.1" cy="184.2" rx="4.2" ry="3.6" fill="#d6d6d6" opacity="0.9"/><ellipse cx="216.4" cy="190.4" rx="7.2" ry="6.1" fill="#a0a0a0" opacity="0.9"/><ellipse cx="99.9" cy="180.0" rx="6.6" ry="5.6" fill="#f2f2f2" opacity="0.9"/><ellipse cx="175.9" cy="172.8" rx="5.3" ry="4.5" fill="#c2c2c2" opacity="0.9"/><ellipse cx="432.9" cy="207.7" rx="6.2" ry="5.3" fill="#d6d6d6" opacity="0.9"/><ellipse cx="148.0" cy="188.6" rx="5.5" ry="4.7" fill="#a0a0a0" opacity="0.9"/><ellipse cx="194.2" cy="214.6" rx="7.2" ry="6.1" fill="#a0a0a0" opacity="0.9"/><ellipse cx="326.8" cy="201.1" rx="4.8" ry="4.1" fill="#e8e8e8" opacity="0.9"/><ellipse cx="184.3" cy="179.7" rx="6.7" ry="5.7" fill="#a0a0a0" opacity="0.9"/><ellipse cx="439.4" cy="222.5" rx="6.1" ry="5.1" fill="#d6d6d6" opacity="0.9"/><ellipse cx="292.7" cy="176.5" rx="4.6" ry="3.9" fill="#a0a0a0" opacity="0.9"/><ellipse cx="209.9" cy="177.0" rx="7.4" ry="6.3" fill="#c2c2c2" opacity="0.9"/><ellipse cx="227.9" cy="224.6" rx="4.1" ry="3.5" fill="#a0a0a0" opacity="0.9"/><ellipse cx="259.7" cy="202.3" rx="4.7" ry="4.0" fill="#c2c2c2" opacity="0.9"/><ellipse cx="282.6" cy="216.5" rx="4.8" ry="4.1" fill="#c2c2c2" opacity="0.9"/><ellipse cx="140.1" cy="216.9" rx="4.3" ry="3.7" fill="#a0a0a0" opacity="0.9"/><ellipse cx="365.4" cy="193.8" rx="7.0" ry="6.0" fill="#e8e8e8" opacity="0.9"/><ellipse cx="166.5" cy="211.8" rx="5.2" ry="4.4" fill="#a0a0a0" opacity="0.9"/><ellipse cx="297.9" cy="180.6" rx="5.4" ry="4.6" fill="#d6d6d6" opacity="0.9"/><ellipse cx="101.5" cy="202.8" rx="4.3" ry="3.6" fill="#a0a0a0" opacity="0.9"/><ellipse cx="96.9" cy="222.3" rx="3.7" ry="3.2" fill="#d6d6d6" opacity="0.9"/><ellipse cx="330.0" cy="193.8" rx="5.7" ry="4.9" fill="#d6d6d6" opacity="0.9"/><ellipse cx="230.6" cy="205.7" rx="6.6" ry="5.6" fill="#f2f2f2" opacity="0.9"/><ellipse cx="341.9" cy="225.7" rx="7.3" ry="6.2" fill="#f2f2f2" opacity="0.9"/><ellipse cx="370.9" cy="178.2" rx="7.7" ry="6.6" fill="#c2c2c2" opacity="0.9"/><ellipse cx="252.4" cy="220.8" rx="4.9" ry="4.2" fill="#d6d6d6" opacity="0.9"/><ellipse cx="161.9" cy="195.4" rx="5.2" ry="4.4" fill="#c2c2c2" opacity="0.9"/><ellipse cx="342.0" cy="204.0" rx="3.8" ry="3.2" fill="#d6d6d6" opacity="0.9"/><ellipse cx="378.5" cy="219.1" rx="7.9" ry="6.7" fill="#f2f2f2" opacity="0.9"/><ellipse cx="319.5" cy="184.9" rx="4.9" ry="4.1" fill="#f2f2f2" opacity="0.9"/><ellipse cx="416.4" cy="262.0" rx="6.8" ry="5.8" fill="#7a7a7a" opacity="0.9"/><ellipse cx="190.7" cy="202.5" rx="4.2" ry="3.6" fill="#f2f2f2" opacity="0.9"/><ellipse cx="268.9" cy="228.6" rx="7.1" ry="6.0" fill="#8a8a8a" opacity="0.9"/><ellipse cx="393.5" cy="196.5" rx="4.8" ry="4.1" fill="#c2c2c2" opacity="0.9"/><ellipse cx="54.5" cy="195.8" rx="5.5" ry="4.7" fill="#a0a0a0" opacity="0.9"/><ellipse cx="201.9" cy="203.6" rx="3.7" ry="3.2" fill="#d6d6d6" opacity="0.9"/><ellipse cx="224.7" cy="189.5" rx="4.1" ry="3.5" fill="#f2f2f2" opacity="0.9"/><ellipse cx="392.1" cy="218.4" rx="6.6" ry="5.6" fill="#d6d6d6" opacity="0.9"/><ellipse cx="122.2" cy="238.1" rx="5.6" ry="4.8" fill="#8a8a8a" opacity="0.9"/><ellipse cx="296.0" cy="202.2" rx="5.9" ry="5.0" fill="#e8e8e8" opacity="0.9"/><ellipse cx="120.6" cy="226.9" rx="4.0" ry="3.4" fill="#c2c2c2" opacity="0.9"/><ellipse cx="424.7" cy="194.7" rx="7.5" ry="6.3" fill="#c2c2c2" opacity="0.9"/><ellipse cx="319.9" cy="241.5" rx="3.9" ry="3.3" fill="#8a8a8a" opacity="0.9"/><ellipse cx="385.3" cy="209.3" rx="4.7" ry="4.0" fill="#e8e8e8" opacity="0.9"/><ellipse cx="243.1" cy="186.8" rx="7.1" ry="6.0" fill="#a0a0a0" opacity="0.9"/><ellipse cx="394.4" cy="184.4" rx="4.9" ry="4.1" fill="#e8e8e8" opacity="0.9"/><ellipse cx="308.5" cy="206.6" rx="3.9" ry="3.3" fill="#d6d6d6" opacity="0.9"/><ellipse cx="218.9" cy="200.7" rx="3.7" ry="3.1" fill="#a0a0a0" opacity="0.9"/><ellipse cx="276.7" cy="194.9" rx="6.1" ry="5.1" fill="#e8e8e8" opacity="0.9"/><ellipse cx="157.6" cy="185.3" rx="4.8" ry="4.0" fill="#a0a0a0" opacity="0.9"/><ellipse cx="56.4" cy="180.1" rx="7.5" ry="6.4" fill="#a0a0a0" opacity="0.9"/><ellipse cx="227.3" cy="192.8" rx="7.7" ry="6.5" fill="#f2f2f2" opacity="0.9"/><ellipse cx="68.8" cy="213.9" rx="7.6" ry="6.5" fill="#c2c2c2" opacity="0.9"/><ellipse cx="305.0" cy="199.9" rx="5.8" ry="4.9" fill="#a0a0a0" opacity="0.9"/><ellipse cx="339.0" cy="204.1" rx="7.0" ry="5.9" fill="#d6d6d6" opacity="0.9"/><ellipse cx="285.2" cy="195.8" rx="7.0" ry="5.9" fill="#e8e8e8" opacity="0.9"/><ellipse cx="147.6" cy="218.0" rx="6.2" ry="5.3" fill="#c2c2c2" opacity="0.9"/><ellipse cx="59.0" cy="210.6" rx="6.1" ry="5.2" fill="#e8e8e8" opacity="0.9"/><ellipse cx="173.4" cy="204.9" rx="7.1" ry="6.1" fill="#a0a0a0" opacity="0.9"/><ellipse cx="219.5" cy="215.1" rx="3.8" ry="3.3" fill="#e8e8e8" opacity="0.9"/><ellipse cx="269.7" cy="214.7" rx="4.6" ry="3.9" fill="#e8e8e8" opacity="0.9"/><ellipse cx="66.3" cy="209.6" rx="7.2" ry="6.1" fill="#a0a0a0" opacity="0.9"/><ellipse cx="353.4" cy="198.9" rx="6.4" ry="5.5" fill="#a0a0a0" opacity="0.9"/><ellipse cx="112.8" cy="180.6" rx="6.6" ry="5.6" fill="#a0a0a0" opacity="0.9"/><ellipse cx="355.7" cy="194.2" rx="5.1" ry="4.4" fill="#e8e8e8" opacity="0.9"/><ellipse cx="323.0" cy="229.8" rx="6.9" ry="5.9" fill="#7a7a7a" opacity="0.9"/><ellipse cx="434.5" cy="196.6" rx="6.9" ry="5.8" fill="#d6d6d6" opacity="0.9"/><ellipse cx="46.3" cy="200.4" rx="3.9" ry="3.3" fill="#a0a0a0" opacity="0.9"/><ellipse cx="162.7" cy="176.1" rx="3.7" ry="3.1" fill="#a0a0a0" opacity="0.9"/><ellipse cx="135.8" cy="201.8" rx="4.6" ry="3.9" fill="#f2f2f2" opacity="0.9"/><ellipse cx="79.0" cy="188.7" rx="7.8" ry="6.6" fill="#a0a0a0" opacity="0.9"/><ellipse cx="131.2" cy="203.6" rx="8.0" ry="6.8" fill="#c2c2c2" opacity="0.9"/><ellipse cx="269.1" cy="257.7" rx="7.7" ry="6.5" fill="#8a8a8a" opacity="0.9"/><ellipse cx="227.7" cy="217.5" rx="5.2" ry="4.4" fill="#d6d6d6" opacity="0.9"/><ellipse cx="130.1" cy="181.9" rx="6.0" ry="5.1" fill="#e8e8e8" opacity="0.9"/><ellipse cx="234.7" cy="204.1" rx="6.9" ry="5.9" fill="#f2f2f2" opacity="0.9"/><ellipse cx="221.6" cy="250.1" rx="7.4" ry="6.3" fill="#8a8a8a" opacity="0.9"/><ellipse cx="258.4" cy="174.5" rx="4.7" ry="4.0" fill="#c2c2c2" opacity="0.9"/><ellipse cx="290.3" cy="212.0" rx="5.8" ry="4.9" fill="#a0a0a0" opacity="0.9"/><ellipse cx="409.8" cy="186.5" rx="5.1" ry="4.4" fill="#e8e8e8" opacity="0.9"/><ellipse cx="332.6" cy="179.4" rx="4.6" ry="3.9" fill="#d6d6d6" opacity="0.9"/><ellipse cx="53.1" cy="192.8" rx="3.9" ry="3.3" fill="#f2f2f2" opacity="0.9"/><ellipse cx="173.5" cy="200.0" rx="3.7" ry="3.2" fill="#f2f2f2" opacity="0.9"/><ellipse cx="285.1" cy="182.1" rx="5.8" ry="4.9" fill="#e8e8e8" opacity="0.9"/><ellipse cx="57.6" cy="194.9" rx="5.9" ry="5.1" fill="#e8e8e8" opacity="0.9"/><ellipse cx="249.2" cy="188.9" rx="5.5" ry="4.7" fill="#f2f2f2" opacity="0.9"/><ellipse cx="103.1" cy="187.1" rx="6.7" ry="5.7" fill="#f2f2f2" opacity="0.9"/><ellipse cx="99.0" cy="191.2" rx="4.0" ry="3.4" fill="#c2c2c2" opacity="0.9"/><ellipse cx="181.3" cy="174.2" rx="3.6" ry="3.1" fill="#f2f2f2" opacity="0.9"/><ellipse cx="268.5" cy="261.1" rx="4.8" ry="4.1" fill="#7a7a7a" opacity="0.9"/><ellipse cx="71.4" cy="245.7" rx="5.1" ry="4.3" fill="#8a8a8a" opacity="0.9"/><ellipse cx="422.3" cy="233.7" rx="6.3" ry="5.4" fill="#8a8a8a" opacity="0.9"/><ellipse cx="360.8" cy="198.6" rx="5.7" ry="4.8" fill="#c2c2c2" opacity="0.9"/><ellipse cx="157.4" cy="184.0" rx="7.7" ry="6.5" fill="#e8e8e8" opacity="0.9"/><ellipse cx="232.7" cy="207.9" rx="4.6" ry="3.9" fill="#d6d6d6" opacity="0.9"/><ellipse cx="338.4" cy="254.8" rx="5.7" ry="4.8" fill="#9a9a9a" opacity="0.9"/><ellipse cx="322.0" cy="209.8" rx="3.6" ry="3.1" fill="#f2f2f2" opacity="0.9"/><ellipse cx="92.5" cy="258.8" rx="4.7" ry="4.0" fill="#9a9a9a" opacity="0.9"/><ellipse cx="240.7" cy="197.3" rx="5.0" ry="4.2" fill="#c2c2c2" opacity="0.9"/><ellipse cx="73.5" cy="189.5" rx="5.2" ry="4.4" fill="#c2c2c2" opacity="0.9"/><ellipse cx="148.4" cy="182.0" rx="5.6" ry="4.8" fill="#a0a0a0" opacity="0.9"/><ellipse cx="179.9" cy="226.1" rx="6.7" ry="5.7" fill="#e8e8e8" opacity="0.9"/><ellipse cx="349.7" cy="205.5" rx="5.3" ry="4.5" fill="#f2f2f2" opacity="0.9"/><ellipse cx="70.1" cy="197.1" rx="5.5" ry="4.7" fill="#f2f2f2" opacity="0.9"/><ellipse cx="60.1" cy="199.4" rx="4.9" ry="4.2" fill="#c2c2c2" opacity="0.9"/><ellipse cx="231.9" cy="204.7" rx="4.7" ry="4.0" fill="#c2c2c2" opacity="0.9"/><ellipse cx="313.7" cy="172.1" rx="5.9" ry="5.1" fill="#f2f2f2" opacity="0.9"/><ellipse cx="46.4" cy="217.8" rx="6.9" ry="5.9" fill="#d6d6d6" opacity="0.9"/><ellipse cx="291.6" cy="216.9" rx="7.9" ry="6.7" fill="#c2c2c2" opacity="0.9"/><ellipse cx="149.3" cy="173.0" rx="7.1" ry="6.1" fill="#e8e8e8" opacity="0.9"/><ellipse cx="319.7" cy="224.1" rx="7.2" ry="6.1" fill="#e8e8e8" opacity="0.9"/><ellipse cx="176.6" cy="215.5" rx="4.8" ry="4.1" fill="#f2f2f2" opacity="0.9"/><ellipse cx="157.9" cy="200.8" rx="4.6" ry="3.9" fill="#e8e8e8" opacity="0.9"/><ellipse cx="188.1" cy="221.5" rx="6.8" ry="5.8" fill="#d6d6d6" opacity="0.9"/><ellipse cx="469.1" cy="255.4" rx="6.5" ry="5.2" fill="#6e6e6e"/><ellipse cx="414.8" cy="257.9" rx="5.0" ry="4.0" fill="#6e6e6e"/><ellipse cx="444.3" cy="193.2" rx="5.5" ry="4.4" fill="#6e6e6e"/><ellipse cx="423.0" cy="228.6" rx="4.4" ry="3.5" fill="#6e6e6e"/><ellipse cx="421.8" cy="249.2" rx="5.8" ry="4.6" fill="#6e6e6e"/><ellipse cx="410.2" cy="240.8" rx="4.5" ry="3.6" fill="#6e6e6e"/><ellipse cx="444.6" cy="204.7" rx="6.4" ry="5.1" fill="#6e6e6e"/><ellipse cx="406.4" cy="235.1" rx="3.5" ry="2.8" fill="#6e6e6e"/><ellipse cx="468.7" cy="241.3" rx="3.5" ry="2.8" fill="#6e6e6e"/><ellipse cx="449.2" cy="211.5" rx="3.6" ry="2.9" fill="#6e6e6e"/><ellipse cx="406.1" cy="239.7" rx="4.2" ry="3.3" fill="#6e6e6e"/><ellipse cx="442.2" cy="267.9" rx="4.9" ry="3.9" fill="#6e6e6e"/><ellipse cx="445.5" cy="253.3" rx="6.7" ry="5.4" fill="#6e6e6e"/><ellipse cx="411.4" cy="211.7" rx="4.0" ry="3.2" fill="#6e6e6e"/><ellipse cx="443.3" cy="220.9" rx="5.7" ry="4.6" fill="#6e6e6e"/><ellipse cx="401.1" cy="202.6" rx="7.0" ry="5.6" fill="#6e6e6e"/><ellipse cx="459.7" cy="205.5" rx="4.4" ry="3.5" fill="#6e6e6e"/><ellipse cx="433.1" cy="254.1" rx="4.6" ry="3.7" fill="#6e6e6e"/><ellipse cx="462.4" cy="256.6" rx="6.4" ry="5.1" fill="#6e6e6e"/><ellipse cx="403.7" cy="195.4" rx="4.8" ry="3.8" fill="#6e6e6e"/><ellipse cx="459.6" cy="242.0" rx="3.9" ry="3.1" fill="#6e6e6e"/><ellipse cx="447.7" cy="222.7" rx="3.6" ry="2.9" fill="#6e6e6e"/><ellipse cx="436.1" cy="244.0" rx="3.9" ry="3.1" fill="#6e6e6e"/><ellipse cx="412.6" cy="259.3" rx="4.8" ry="3.8" fill="#6e6e6e"/><ellipse cx="456.7" cy="234.5" rx="6.6" ry="5.3" fill="#6e6e6e"/><ellipse cx="460.4" cy="224.6" rx="3.6" ry="2.9" fill="#6e6e6e"/><ellipse cx="460.8" cy="211.6" rx="5.3" ry="4.2" fill="#6e6e6e"/><ellipse cx="411.9" cy="222.0" rx="4.3" ry="3.4" fill="#6e6e6e"/><ellipse cx="396.5" cy="206.1" rx="5.2" ry="4.2" fill="#6e6e6e"/><ellipse cx="434.7" cy="202.1" rx="3.0" ry="2.4" fill="#6e6e6e"/></g><rect x="265" y="4" width="143" height="33" fill="#000"/><rect x="364" y="75.5" width="128" height="102" fill="#000"/><rect x="0" y="228" width="492" height="50" fill="rgba(0,0,0,0.3)"/></g></svg>
<div class="abs" style="left:341px;top:529px;width:492px;height:278px;border:1px solid rgba(80,80,80,0.6);border-radius:12px"></div>
<div class="t" style="top:540.00px;font-size:13px;color:#f4f4f4;-webkit-text-stroke:0.35px currentColor;transform:scaleX(0.9521);transform-origin:0 0;left:353.5px;">2024/09/19&nbsp;&nbsp;19:38:29</div>
<div class="t" style="top:552.30px;font-size:13px;color:#f4f4f4;-webkit-text-stroke:0.35px currentColor;transform:scaleX(0.9160);transform-origin:0 0;left:353.5px;">OGROD</div>
<div class="t" style="top:773.16px;font-size:16px;color:#e8e8e8;transform:scaleX(0.9461);transform-origin:0 0;left:358px;">OGROD mainStream</div>
<div class="t" style="top:773.16px;font-size:16px;color:#e8e8e8;transform:scaleX(0.9303);transform-origin:100% 0;right:1101.00px;">Idle</div>
</body></html>
